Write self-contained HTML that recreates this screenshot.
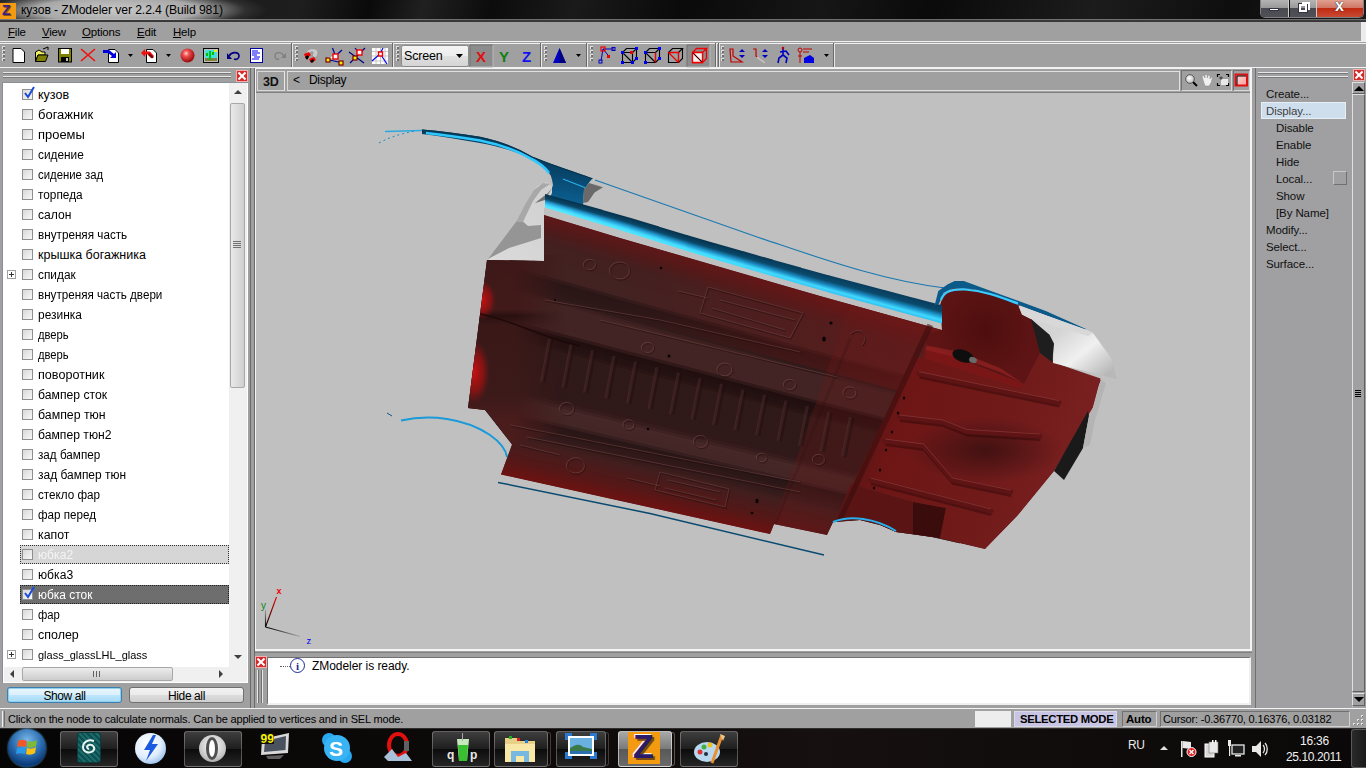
<!DOCTYPE html>
<html><head><meta charset="utf-8">
<style>
*{margin:0;padding:0;box-sizing:border-box}
html,body{width:1366px;height:768px;overflow:hidden;background:#a0a0a0;font-family:"Liberation Sans",sans-serif;font-size:12px;color:#000}
.a{position:absolute}
svg{position:absolute;overflow:visible}
#title{left:0;top:0;width:1366px;height:21px;background:linear-gradient(105deg,#141414 0%,#1e1e1e 22%,#0a0a0a 27%,#202020 31%,#0c0c0c 36%,#1a1a1a 42%,#0a0a0a 50%,#161616 60%,#0a0a0a 68%,#1c1c1c 80%,#0e0e0e 90%,#1a1a1a 100%);overflow:hidden;border-bottom:1px solid #3a3a3a}
#menubar{left:0;top:21px;width:1366px;height:20px;background:#a0a0a0;border-top:1px solid #383838}
.menu{top:4px;font-size:11.5px;letter-spacing:-0.2px}
#toolbar{left:0;top:41px;width:1366px;height:27px;background:#a0a0a0;border-top:1px solid #f0f0f0;border-bottom:1px solid #f0f0f0}
.grip{position:absolute;width:4px;height:16px;top:46px;background:repeating-linear-gradient(#d8d8d8 0 2px,#707070 2px 3px,#a0a0a0 3px 4px)}
.sep{position:absolute;top:43px;width:2px;height:24px;border-left:1px solid #707070;border-right:1px solid #e8e8e8}
.it{position:absolute;left:38px;transform-origin:0 0;font-size:12.5px;white-space:nowrap;line-height:14px}
.cb{position:absolute;left:22px;width:11px;height:11px;border:1px solid #8e8f8f;background:linear-gradient(135deg,#d8d8d8,#f8f8f8)}
.pl{position:absolute;left:7px;width:9px;height:9px;border:1px solid #a0a0a0;background:#fff}
.pl:before{content:"";position:absolute;left:1px;top:3px;width:5px;height:1px;background:#333}
.pl:after{content:"";position:absolute;left:3px;top:1px;width:1px;height:5px;background:#333}
.rx{position:absolute;width:12px;height:12px;background:#d42a2a;border:1px solid #f4b0b0}
.rx:before,.rx:after{content:"";position:absolute;left:0px;top:4px;width:10px;height:2px;background:#fff;transform:rotate(45deg)}
.rx:after{transform:rotate(-45deg)}
.rp{position:absolute;font-size:11.5px;letter-spacing:-0.1px;white-space:nowrap;color:#101010}
#vp{left:256px;top:93px;width:994px;height:556px;background:#c0c0c0;overflow:hidden}
.tb{position:absolute;top:731px;height:36px;border:1px solid rgba(255,255,255,0.28);border-radius:3px;background:linear-gradient(#3e3e3e,#1e1e1e 50%,#0c0c0c 51%,#262626)}
</style></head><body>
<!-- TITLE -->
<div id="title" class="a">
 <div class="a" style="left:0;top:0;width:300px;height:20px;background:radial-gradient(ellipse 150px 22px at 118px 10px,#c8c8c8 0%,#a8a8a8 55%,rgba(60,60,60,0.6) 85%,rgba(14,14,14,0) 100%)"></div>
 <div class="a" style="left:0;top:3px;width:16px;height:16px;background:#f39a12"></div>
 <div class="a" style="left:2px;top:2px;font:bold 14px 'Liberation Sans';color:#3a2080;text-shadow:1px 1px 0 #8a5010">Z</div>
 <div class="a" style="left:0;top:19px;width:1366px;height:1px;background:#c8c8c8;opacity:0.5"></div>
 <div class="a" style="left:21px;top:3px;font-size:12.2px;color:#000;white-space:nowrap;letter-spacing:-0.1px">кузов - ZModeler ver 2.2.4 (Build 981)</div>
 <div class="a" style="left:1260px;top:0;width:104px;height:18px;border:1px solid #808080;border-top:none;border-radius:0 0 5px 5px;overflow:hidden;background:#111">
  <div class="a" style="left:0;top:0;width:28px;height:17px;background:linear-gradient(#b4b4b4,#9a9a9a 45%,#4a4a50 50%,#505058);border-right:1px solid #cfcfcf"></div>
  <div class="a" style="left:8px;top:8px;width:10px;height:3px;background:#fff;border:1px solid #334"></div>
  <div class="a" style="left:29px;top:0;width:27px;height:17px;background:linear-gradient(#b4b4b4,#9a9a9a 45%,#4a4a50 50%,#505058);border-right:1px solid #cfcfcf"></div>
  <div class="a" style="left:38px;top:4px;width:8px;height:8px;border:2px solid #fff;outline:1px solid #334"></div>
  <div class="a" style="left:41px;top:2px;width:8px;height:8px;border-top:2px solid #fff;border-right:2px solid #fff"></div>
  <div class="a" style="left:56px;top:0;width:48px;height:17px;background:linear-gradient(#e0a090,#d07866 45%,#c02a10 50%,#c84a34)"></div>
  <div class="a" style="left:74px;top:-3px;font:bold 16px 'Liberation Sans';color:#fff;text-shadow:0 0 1px #223,0 0 1px #223">x</div>
 </div>
</div>
<!-- MENU -->
<div id="menubar" class="a">
 <span class="a menu" style="left:8px"><u>F</u>ile</span>
 <span class="a menu" style="left:42px"><u>V</u>iew</span>
 <span class="a menu" style="left:82px"><u>O</u>ptions</span>
 <span class="a menu" style="left:137px"><u>E</u>dit</span>
 <span class="a menu" style="left:173px"><u>H</u>elp</span>
</div>
<div class="a" style="left:1361px;top:22px;width:5px;height:19px;background:#ececec"></div>
<!-- TOOLBAR -->
<div id="toolbar" class="a">
 <div class="a" style="left:0;top:1px;width:1366px;height:1px;background:#f0f0f0"></div>
</div>
<div id="tbicons">
<svg style="left:0;top:41px" width="1366" height="27" viewBox="0 41 1366 27">
<g id="grips" fill="#e0e0e0">
 <rect x="2" y="46" width="3" height="3"/><rect x="2" y="50" width="3" height="3"/><rect x="2" y="54" width="3" height="3"/><rect x="2" y="58" width="3" height="3"/>
</g>
<g fill="#707070">
 <rect x="3" y="47" width="2" height="2"/><rect x="3" y="51" width="2" height="2"/><rect x="3" y="55" width="2" height="2"/><rect x="3" y="59" width="2" height="2"/>
</g>
<!-- new -->
<path d="M13 48.5 L21 48.5 L24.5 52 L24.5 62.5 L13 62.5 Z" fill="#fff" stroke="#000" stroke-width="1"/>
<!-- open -->
<path d="M35.5 52 L39 50 L42 52 L45 52 L45 55 L38 55 L35.5 61.5 Z" fill="#f0f060" stroke="#000"/>
<path d="M35.5 61.5 L38 55 L48 55 L45.5 61.5 Z" fill="#808000" stroke="#000"/>
<path d="M43 49 L48 47 L48 50" stroke="#000" fill="none"/>
<!-- save -->
<rect x="58.5" y="48.5" width="13" height="13.5" fill="#808000" stroke="#000"/>
<rect x="61" y="49" width="8" height="5" fill="#fff"/>
<rect x="61" y="57" width="8" height="5" fill="#000"/><rect x="66" y="58" width="2" height="3" fill="#c0c0c0"/>
<!-- delete X -->
<path d="M81 49 L95 61 M95 49 L81 61" stroke="#f01010" stroke-width="1.6"/>
<!-- import -->
<path d="M108.5 49.5 L115 49.5 L118.5 53 L118.5 62.5 L108.5 62.5 Z" fill="#fff" stroke="#000"/>
<path d="M103 50 L109 50 L114 54 L116 52 L116 58 L110 58 L112 56 L108 53 L103 53 Z" fill="#0000e0"/>
<path d="M128 54 L133 54 L130.5 57 Z" fill="#000"/>
<!-- export -->
<path d="M146.5 49.5 L153 49.5 L156.5 53 L156.5 62.5 L146.5 62.5 Z" fill="#fff" stroke="#000"/>
<path d="M141 53 L145 49 L145 51.5 L150 51.5 L154 56 L151 58 L148 54.5 L145 54.5 L145 57 Z" fill="#f01010"/>
<path d="M149 53 L154 57 L152 58.5 L148 55 Z" fill="#800000"/>
<path d="M166 54 L171 54 L168.5 57 Z" fill="#000"/>
<!-- red ball -->
<defs><radialGradient id="rb" cx="0.4" cy="0.35" r="0.6"><stop offset="0" stop-color="#ffd0d0"/><stop offset="0.35" stop-color="#f05050"/><stop offset="1" stop-color="#a01010"/></radialGradient></defs>
<circle cx="187.5" cy="55.5" r="7" fill="url(#rb)"/>
<!-- cactus image -->
<rect x="203.5" y="48.5" width="15" height="14" fill="#c0c0c0" stroke="#000"/>
<rect x="205" y="50" width="12" height="8" fill="#40e0e0"/><rect x="205" y="58" width="12" height="3" fill="#808040"/>
<rect x="209" y="51" width="2" height="9" fill="#00c000"/><rect x="206" y="53" width="2" height="3" fill="#00c000"/><rect x="212" y="52" width="2" height="3" fill="#00c000"/>
<rect x="214" y="50" width="3" height="2" fill="#f0f000"/>
<!-- undo -->
<path d="M229 56 C232 51 239 52 239 56 C239 59 236 60 234 59" stroke="#000080" stroke-width="1.6" fill="none"/>
<path d="M227 53 L227 59 L232 59 Z" fill="#000080"/>
<!-- doc blue -->
<rect x="250.5" y="48.5" width="12" height="14" fill="#fff" stroke="#0000a0"/>
<path d="M252 51 H258 M252 53 H260 M252 55 H257 M254 57 H260 M252 59 H259" stroke="#0000f0"/>
<!-- redo gray -->
<path d="M284 56 C281 51 275 52 275 56 C275 59 277 60 279 59" stroke="#808080" stroke-width="1.4" fill="none"/>
<path d="M286 53 L286 58 L281 58 Z" fill="#808080"/>
<!-- separators -->
<g stroke-width="1">
 <path d="M291.5 43 V67" stroke="#6a6a6a"/><path d="M292.5 43 V67" stroke="#e8e8e8"/>
 <path d="M392.5 43 V67" stroke="#6a6a6a"/><path d="M393.5 43 V67" stroke="#e8e8e8"/>
 <path d="M540.5 43 V67" stroke="#6a6a6a"/><path d="M541.5 43 V67" stroke="#e8e8e8"/>
 <path d="M586.5 43 V67" stroke="#6a6a6a"/><path d="M587.5 43 V67" stroke="#e8e8e8"/>
 <path d="M715.5 43 V67" stroke="#6a6a6a"/><path d="M716.5 43 V67" stroke="#e8e8e8"/>
 <path d="M718.5 43 V67" stroke="#6a6a6a"/><path d="M719.5 43 V67" stroke="#e8e8e8"/>
 <path d="M833.5 43 V67" stroke="#6a6a6a"/><path d="M834.5 43 V67" stroke="#e8e8e8"/>
</g>
<g fill="#e0e0e0">
 <rect x="295" y="46" width="3" height="3"/><rect x="295" y="50" width="3" height="3"/><rect x="295" y="54" width="3" height="3"/><rect x="295" y="58" width="3" height="3"/>
 <rect x="396" y="46" width="3" height="3"/><rect x="396" y="50" width="3" height="3"/><rect x="396" y="54" width="3" height="3"/><rect x="396" y="58" width="3" height="3"/>
 <rect x="544" y="46" width="3" height="3"/><rect x="544" y="50" width="3" height="3"/><rect x="544" y="54" width="3" height="3"/><rect x="544" y="58" width="3" height="3"/>
 <rect x="590" y="46" width="3" height="3"/><rect x="590" y="50" width="3" height="3"/><rect x="590" y="54" width="3" height="3"/><rect x="590" y="58" width="3" height="3"/>
 <rect x="721" y="46" width="3" height="3"/><rect x="721" y="50" width="3" height="3"/><rect x="721" y="54" width="3" height="3"/><rect x="721" y="58" width="3" height="3"/>
</g>
<g fill="#707070">
 <rect x="296" y="47" width="2" height="2"/><rect x="296" y="51" width="2" height="2"/><rect x="296" y="55" width="2" height="2"/><rect x="296" y="59" width="2" height="2"/>
 <rect x="397" y="47" width="2" height="2"/><rect x="397" y="51" width="2" height="2"/><rect x="397" y="55" width="2" height="2"/><rect x="397" y="59" width="2" height="2"/>
 <rect x="545" y="47" width="2" height="2"/><rect x="545" y="51" width="2" height="2"/><rect x="545" y="55" width="2" height="2"/><rect x="545" y="59" width="2" height="2"/>
 <rect x="591" y="47" width="2" height="2"/><rect x="591" y="51" width="2" height="2"/><rect x="591" y="55" width="2" height="2"/><rect x="591" y="59" width="2" height="2"/>
 <rect x="722" y="47" width="2" height="2"/><rect x="722" y="51" width="2" height="2"/><rect x="722" y="55" width="2" height="2"/><rect x="722" y="59" width="2" height="2"/>
</g>
<!-- magnet -->
<path d="M306 54 C306 49 313 47 317 50 C319 52 318 56 315 58 L312 55 C314 53 313 51 311 52 L309 54 Z" fill="#c8c8c8" stroke="#888" stroke-width="0.6"/>
<path d="M304 54 L309 52 L311 55 L306 59 Z" fill="#f00000"/><path d="M305 57 L308 55 L309 57 L307 60 Z" fill="#000"/>
<path d="M309 59 L314 57 L316 60 L311 63 Z" fill="#f00000"/><path d="M310 61 L313 59 L314 61 L312 63 Z" fill="#000"/>
<!-- vertex -->
<path d="M332.5 48 L335.5 56 M335.5 56 L342 50 M327.5 59.5 L340.5 62.5" stroke="#0000a0" stroke-width="1.2" fill="none"/>
<path d="M327 59 L336 56" stroke="#fff" stroke-width="1.5"/>
<rect x="333" y="54" width="5" height="5" fill="#fff" stroke="#f00000" stroke-width="1.4"/>
<rect x="326" y="58" width="4" height="4" fill="#f0f000" stroke="#800000" stroke-width="1.2"/>
<rect x="339" y="61" width="4" height="4" fill="#f0f000" stroke="#800000" stroke-width="1.2"/>
<!-- cross -->
<path d="M349 52 L364 63 M350 63 L365 48 M355 48 L359 53" stroke="#000080" stroke-width="1.2" fill="none"/>
<rect x="357" y="50" width="5" height="5" fill="#fff" stroke="#f00000" stroke-width="1.4"/>
<rect x="353" y="56" width="4" height="4" fill="#f0f000" stroke="#800000" stroke-width="1.2"/>
<!-- grid -->
<rect x="372" y="48" width="16" height="16" fill="#fff"/>
<path d="M372 51.5 H388 M372 56 H388 M372 61 H388 M376 48 V64 M380.5 48 V64 M385 48 V64" stroke="#c8c8c8" stroke-width="1"/>
<path d="M372 61 L380 54 L383 48 M381 55 L387 64" stroke="#0000f0" stroke-width="1.2" fill="none"/>
<rect x="378.5" y="52" width="4" height="4" fill="#fff" stroke="#f00000" stroke-width="1.4"/>
<!-- combo -->
<rect x="401.5" y="45.5" width="67" height="21" rx="2" fill="url(#cmb)" stroke="#8a8a8a"/>
<defs><linearGradient id="cmb" x1="0" y1="0" x2="0" y2="1"><stop offset="0" stop-color="#f4f4f4"/><stop offset="0.5" stop-color="#ececec"/><stop offset="0.51" stop-color="#e0e0e0"/><stop offset="1" stop-color="#d4d4d4"/></linearGradient></defs>
<text x="404" y="60" font-family="Liberation Sans" font-size="12.5" fill="#000" letter-spacing="-0.2">Screen</text>
<path d="M456 54 L463 54 L459.5 58 Z" fill="#000"/>
<!-- XYZ -->
<rect x="470" y="45" width="23" height="22" fill="#8c8c8c"/>
<path d="M470 67 V45 H493" stroke="#707070" fill="none"/><path d="M493 45 V67 H470" stroke="#b8b8b8" fill="none"/>
<text x="476" y="62" font-family="Liberation Sans" font-weight="bold" font-size="15" fill="#e01010">X</text>
<text x="499" y="62" font-family="Liberation Sans" font-weight="bold" font-size="15" fill="#108010">Y</text>
<text x="522" y="62" font-family="Liberation Sans" font-weight="bold" font-size="15" fill="#1010f0">Z</text>
<!-- cone -->
<path d="M559.5 48 L553 63 L566 63 Z" fill="#0000c0"/><path d="M559.5 48 L559.5 63 L566 63 Z" fill="#000080"/>
<path d="M576 54 L581 54 L578.5 57 Z" fill="#000"/>
<!-- vertex lines -->
<path d="M603 49 L601 61 M603 49 L614 49 M603 49 L608 55" stroke="#0000c0" stroke-width="1" fill="none"/>
<rect x="601" y="47" width="4" height="4" fill="none" stroke="#f00000" stroke-width="1.2"/>
<rect x="607" y="55" width="3" height="3" fill="#f00000"/>
<rect x="599" y="60" width="3" height="3" fill="none" stroke="#0000c0"/><rect x="612" y="47.5" width="3" height="3" fill="none" stroke="#0000c0"/>
<!-- cubes -->
<g fill="none" stroke-width="1.1">
 <path d="M622.5 52.5 H632.5 V62.5 H622.5 Z M622.5 52.5 L626.5 48.5 H636.5 L632.5 52.5 M636.5 48.5 V58.5 L632.5 62.5 M622.5 52.5 L632.5 62.5" stroke="#000"/>
 <path d="M645.5 52.5 H655.5 V62.5 H645.5 Z M645.5 52.5 L649.5 48.5 H659.5 L655.5 52.5 M659.5 48.5 V58.5 L655.5 62.5 M645.5 52.5 L655.5 62.5" stroke="#000"/>
 <path d="M668.5 52.5 H678.5 V62.5 H668.5 Z M668.5 52.5 L672.5 48.5 H682.5 L678.5 52.5 M682.5 48.5 V58.5 L678.5 62.5" stroke="#000"/>
 <path d="M668.5 52.5 L678.5 62.5 M668.5 52.5 H678.5 V62.5" stroke="#f00000" stroke-width="1.3"/>
</g>
<g fill="#0000f0"><rect x="621" y="51" width="3" height="3"/><rect x="631" y="61" width="3" height="3"/><rect x="635" y="47" width="3" height="3"/><rect x="621" y="61" width="3" height="3"/><rect x="635" y="57" width="3" height="3"/>
<rect x="644" y="51" width="3" height="3"/><rect x="644" y="61" width="3" height="3"/><rect x="658" y="47" width="3" height="3"/><rect x="658" y="57" width="3" height="3"/></g>
<rect x="630" y="51" width="3" height="3" fill="#f00000"/>
<path d="M655.5 52.5 V62.5" stroke="#f00000" stroke-width="1.3"/>
<rect x="687" y="45" width="23" height="22" fill="#8c8c8c"/>
<path d="M687 67 V45 H710" stroke="#707070" fill="none"/><path d="M710 45 V67 H687" stroke="#b8b8b8" fill="none"/>
<path d="M692.5 52.5 H702.5 V62.5 H692.5 Z M692.5 52.5 L696.5 48.5 H706.5 L702.5 52.5 M706.5 48.5 V58.5 L702.5 62.5 M692.5 52.5 L702.5 62.5" stroke="#f00000" stroke-width="1.3" fill="none"/>
<rect x="693" y="53" width="9" height="9" fill="#fff" opacity="0.9"/>
<path d="M692.5 52.5 H702.5 V62.5 H692.5 Z M692.5 52.5 L702.5 62.5" stroke="#f00000" stroke-width="1.3" fill="none"/>
<path d="M693 53 L702 62" stroke="#000" stroke-width="1"/>
<!-- last group -->
<path d="M730 49 L733 49 L733 56 L742 62 L731 62 Z" fill="none" stroke="#c00000" stroke-width="1.2"/>
<path d="M739 52 L742 49 L745 52 Z M739 55 L745 55 L742 58 Z" fill="#0000c0"/>
<path d="M753 49 L756 49 L756 56 L765 63" fill="none" stroke="#c00000" stroke-width="1.2"/>
<path d="M757 57 L765 63" stroke="#c0c0c0" stroke-width="2"/>
<path d="M762 52 L765 49 L768 52 Z M762 55 L768 55 L765 58 Z" fill="#0000c0"/>
<path d="M783 48 L783 55 L779 58 L778 63 M783 55 L787 58 L786 63 M780 52 L786 51 L789 55" stroke="#0000c0" stroke-width="1.6" fill="none"/>
<circle cx="783" cy="48" r="1.3" fill="#c00000"/>
<circle cx="800" cy="50" r="2" fill="none" stroke="#c00000"/><path d="M800 52 V63 M798 56 H802" stroke="#c00000"/>
<path d="M803 49 H812 M803 52 H809" stroke="#c00000"/>
<path d="M804 58 L810 55 L814 58 L814 63 L804 63 Z" fill="#0000e0"/>
<path d="M824 54 L829 54 L826.5 57 Z" fill="#000"/>
</svg>
</div>


<!-- LEFT PANEL -->
<div class="a" style="left:0;top:68px;width:251px;height:640px;background:#a0a0a0;border-right:1px solid #6a6a6a"></div>
<div class="a" style="left:3px;top:72px;width:228px;height:2px;border-top:1px solid #e8e8e8;border-bottom:1px solid #787878"></div>
<div class="a" style="left:3px;top:76px;width:228px;height:2px;border-top:1px solid #e8e8e8;border-bottom:1px solid #787878"></div>
<div class="rx" style="left:236px;top:70px"></div>
<div class="a" style="left:2px;top:82px;width:246px;height:601px;background:#fff;border-left:1px solid #8a9098;border-top:1px solid #8a9098"></div>
<div id="items">
<div class="cb" style="top:89px"></div>
<svg style="left:22px;top:86px" width="14" height="14"><path d="M3 7 L6 11 L12 1" stroke="#1a4ad8" stroke-width="2" fill="none"/></svg>
<div class="it" style="top:88.4px;transform:scaleX(1.0)">кузов</div>
<div class="cb" style="top:109px"></div>
<div class="it" style="top:108.4px;transform:scaleX(1.038)">богажник</div>
<div class="cb" style="top:129px"></div>
<div class="it" style="top:128.4px;transform:scaleX(1.035)">проемы</div>
<div class="cb" style="top:149px"></div>
<div class="it" style="top:148.4px;transform:scaleX(0.947)">сидение</div>
<div class="cb" style="top:169px"></div>
<div class="it" style="top:168.4px;transform:scaleX(0.908)">сидение зад</div>
<div class="cb" style="top:189px"></div>
<div class="it" style="top:188.4px;transform:scaleX(0.946)">торпеда</div>
<div class="cb" style="top:209px"></div>
<div class="it" style="top:208.4px;transform:scaleX(0.97)">салон</div>
<div class="cb" style="top:229px"></div>
<div class="it" style="top:228.4px;transform:scaleX(0.936)">внутреняя часть</div>
<div class="cb" style="top:249px"></div>
<div class="it" style="top:248.4px;transform:scaleX(1.0)">крышка богажника</div>
<div class="cb" style="top:269px"></div>
<div class="pl" style="top:270px"></div>
<div class="it" style="top:268.4px;transform:scaleX(0.949)">спидак</div>
<div class="cb" style="top:289px"></div>
<div class="it" style="top:288.4px;transform:scaleX(0.932)">внутреняя часть двери</div>
<div class="cb" style="top:309px"></div>
<div class="it" style="top:308.4px;transform:scaleX(0.956)">резинка</div>
<div class="cb" style="top:329px"></div>
<div class="it" style="top:328.4px;transform:scaleX(0.897)">дверь</div>
<div class="cb" style="top:349px"></div>
<div class="it" style="top:348.4px;transform:scaleX(0.897)">дверь</div>
<div class="cb" style="top:369px"></div>
<div class="it" style="top:368.4px;transform:scaleX(1.008)">поворотник</div>
<div class="cb" style="top:389px"></div>
<div class="it" style="top:388.4px;transform:scaleX(0.977)">бампер сток</div>
<div class="cb" style="top:409px"></div>
<div class="it" style="top:408.4px;transform:scaleX(0.987)">бампер тюн</div>
<div class="cb" style="top:429px"></div>
<div class="it" style="top:428.4px;transform:scaleX(0.974)">бампер тюн2</div>
<div class="cb" style="top:449px"></div>
<div class="it" style="top:448.4px;transform:scaleX(0.935)">зад бампер</div>
<div class="cb" style="top:469px"></div>
<div class="it" style="top:468.4px;transform:scaleX(0.957)">зад бампер тюн</div>
<div class="cb" style="top:489px"></div>
<div class="it" style="top:488.4px;transform:scaleX(0.935)">стекло фар</div>
<div class="cb" style="top:509px"></div>
<div class="it" style="top:508.4px;transform:scaleX(0.93)">фар перед</div>
<div class="cb" style="top:529px"></div>
<div class="it" style="top:528.4px;transform:scaleX(0.987)">капот</div>
<div class="a" style="left:20px;top:545px;width:209px;height:19px;background:#d6d6d6;border:1px dotted #303030"></div>
<div class="cb" style="top:549px"></div>
<div class="it" style="top:548.4px;color:#f4f4f4;transform:scaleX(0.971)">юбка2</div>
<div class="cb" style="top:569px"></div>
<div class="it" style="top:568.4px;transform:scaleX(0.971)">юбка3</div>
<div class="a" style="left:20px;top:585px;width:209px;height:19px;background:#6e6e6e;border:1px dotted #202020"></div>
<div class="cb" style="top:589px"></div>
<svg style="left:22px;top:586px" width="14" height="14"><path d="M3 7 L6 11 L12 1" stroke="#1a4ad8" stroke-width="2" fill="none"/></svg>
<div class="it" style="top:588.4px;color:#ffffff;transform:scaleX(0.955)">юбка сток</div>
<div class="cb" style="top:609px"></div>
<div class="it" style="top:608.4px;transform:scaleX(0.904)">фар</div>
<div class="cb" style="top:629px"></div>
<div class="it" style="top:628.4px;transform:scaleX(0.997)">сполер</div>
<div class="cb" style="top:649px"></div>
<div class="pl" style="top:650px"></div>
<div class="it" style="top:648.4px;font-size:11.2px;transform:scaleX(0.982)">glass_glassLHL_glass</div>
</div>
<!-- left scrollbar -->
<div class="a" style="left:229px;top:83px;width:18px;height:599px;background:#f0f0f0"></div>
<div class="a" style="left:234px;top:90px;width:0;height:0;border-left:4px solid transparent;border-right:4px solid transparent;border-bottom:4px solid #404040"></div>
<div class="a" style="left:230px;top:103px;width:15px;height:285px;border:1px solid #a8a8a8;border-radius:2px;background:linear-gradient(90deg,#e8e8e8,#dcdcdc 50%,#cfcfcf)"></div>
<div class="a" style="left:233px;top:241px;width:8px;height:7px;background:repeating-linear-gradient(#707070 0 1px,transparent 1px 2px)"></div>
<div class="a" style="left:234px;top:655px;width:0;height:0;border-left:4px solid transparent;border-right:4px solid transparent;border-top:4px solid #404040"></div>
<!-- h scrollbar -->
<div class="a" style="left:4px;top:667px;width:225px;height:15px;background:#f0f0f0"></div>
<div class="a" style="left:10px;top:670px;width:0;height:0;border-top:4px solid transparent;border-bottom:4px solid transparent;border-right:4px solid #404040"></div>
<div class="a" style="left:22px;top:667px;width:151px;height:14px;border:1px solid #a8a8a8;border-radius:2px;background:linear-gradient(#ececec,#dcdcdc 50%,#cccccc)"></div>
<div class="a" style="left:93px;top:671px;width:7px;height:6px;background:repeating-linear-gradient(90deg,#606060 0 1px,transparent 1px 3px)"></div>
<div class="a" style="left:219px;top:670px;width:0;height:0;border-top:4px solid transparent;border-bottom:4px solid transparent;border-left:4px solid #404040"></div>
<!-- buttons -->
<div class="a" style="left:7px;top:687px;width:115px;height:16px;border:1px solid #3c7fb1;border-radius:3px;background:linear-gradient(#eaf6fd,#d9f0fc 50%,#bee6fd 51%,#a7d9f5);box-shadow:inset 0 0 0 1px #8fd0ef"></div>
<div class="a" style="left:7px;top:689px;width:115px;text-align:center;font-size:12px;letter-spacing:-0.4px">Show all</div>
<div class="a" style="left:129px;top:687px;width:115px;height:16px;border:1px solid #707070;border-radius:3px;background:linear-gradient(#f2f2f2,#ebebeb 50%,#dddddd 51%,#cfcfcf)"></div>
<div class="a" style="left:129px;top:689px;width:115px;text-align:center;font-size:12px;letter-spacing:-0.4px">Hide all</div>

<!-- VIEWPORT FRAME -->
<div class="a" style="left:253px;top:68px;width:2px;height:640px;background:#6a6a6a;border-left:1px solid #a0a0a0"></div>
<div class="a" style="left:255px;top:68px;width:997px;height:583px;border-left:1px solid #f4f4f4;border-top:1px solid #f4f4f4;border-right:2px solid #f4f4f4;border-bottom:2px solid #f4f4f4"></div>
<div class="a" style="left:257px;top:71px;width:28px;height:20px;border:1px solid #d8d8d8;border-right-color:#e8e8e8;background:#a0a0a0"></div>
<div class="a" style="left:263px;top:75px;font:bold 12.5px 'Liberation Sans';letter-spacing:-0.3px;color:#101010">3D</div>
<div class="a" style="left:287px;top:71px;width:893px;height:20px;border:1px solid #e0e0e0;border-left-color:#d8d8d8;background:#a0a0a0"></div>
<div class="a" style="left:293px;top:73px;font-size:12px">&lt;</div>
<div class="a" style="left:309px;top:73px;font-size:12px;letter-spacing:-0.3px">Display</div>
<div class="a" style="left:1181px;top:70px;width:51px;height:21px;border:1px solid #d8d8d8;border-top-color:#707070;border-left-color:#707070;background:#a0a0a0"></div>
<div class="a" style="left:1233px;top:70px;width:17px;height:21px;border:1px solid #d8d8d8;border-top-color:#707070;border-left-color:#707070;background:#a0a0a0"></div>
<svg style="left:1180px;top:68px" width="72" height="26" viewBox="1180 68 72 26">
 <defs><radialGradient id="mg" cx="0.4" cy="0.4" r="0.7"><stop offset="0" stop-color="#fff"/><stop offset="1" stop-color="#b0b0b0"/></radialGradient>
 <linearGradient id="rsq" x1="0" y1="0" x2="1" y2="1"><stop offset="0" stop-color="#ffd8d8"/><stop offset="1" stop-color="#f4a0a0"/></linearGradient></defs>
 <path d="M1193 82 L1197 86" stroke="#000" stroke-width="2"/>
 <circle cx="1190" cy="79" r="4.3" fill="url(#mg)" stroke="#404040" stroke-width="0.8"/>
 <path d="M1203 80 L1202 76 L1204 75.5 L1205 78 L1205 74.5 L1207 74.5 L1207.5 78 L1208 75 L1210 75.5 L1210 79 L1211 77 L1212.5 77.5 L1211 83 L1209 86 L1205 86 Z" fill="#f0f0f0" stroke="#909090" stroke-width="0.6"/>
 <path d="M1217.5 77 V74.5 H1220 M1226 74.5 H1228.5 V77 M1228.5 83 V85.5 H1226 M1220 85.5 H1217.5 V83" stroke="#000" stroke-width="1.2" fill="none"/>
 <rect x="1221" y="79" width="7" height="6" fill="#e8e8e8"/>
 <path d="M1219 78 C1220 76 1222 76 1223 78 L1221 80 Z" fill="#505050"/>
 <rect x="1235.5" y="74.5" width="11.5" height="11" fill="url(#rsq)" stroke="#e01010" stroke-width="2"/>
 <path d="M1237 85 V76 H1246" stroke="#000" stroke-width="1" fill="none"/>
</svg>
<div class="a" style="left:256px;top:92px;width:994px;height:1px;background:#808080"></div>
<div id="vp" class="a"><svg style="left:0;top:0" width="994" height="556" viewBox="256 93 994 556">
<defs>
<clipPath id="cFloor"><polygon points="544.0,215.0 620.0,237.9 820.0,296.1 942.0,330.0 942.0,305.0 950.0,291.0 965.0,289.0 1000.0,297.0 1019.0,306.0 1033.0,320.0 1052.0,333.0 1053.0,362.0 1101.0,380.0 1088.0,411.0 1054.0,471.0 1018.0,515.0 985.0,549.0 932.0,537.0 896.0,532.0 880.0,525.0 860.0,520.0 833.0,522.0 827.0,535.0 774.0,524.0 770.0,534.0 501.0,474.5 512.0,444.5 485.0,410.0 468.0,408.0 487.0,260.0 544.0,261.0"/></clipPath>
<linearGradient id="gLeft" gradientUnits="userSpaceOnUse" x1="470" y1="0" x2="500" y2="0">
 <stop offset="0" stop-color="#c81414" stop-opacity="0.85"/><stop offset="1" stop-color="#b01010" stop-opacity="0"/>
</linearGradient>
<linearGradient id="gRedR" gradientUnits="userSpaceOnUse" x1="620" y1="0" x2="900" y2="0">
 <stop offset="0" stop-color="#7a1010" stop-opacity="0"/><stop offset="1" stop-color="#8a1414" stop-opacity="0.35"/>
</linearGradient>
<linearGradient id="gRear" gradientUnits="userSpaceOnUse" x1="870" y1="400" x2="1080" y2="470">
 <stop offset="0" stop-color="#581414"/><stop offset="0.15" stop-color="#6e1616"/><stop offset="0.6" stop-color="#701a1a"/><stop offset="1" stop-color="#7a2020"/>
</linearGradient>
<radialGradient id="gBlob" gradientUnits="userSpaceOnUse" cx="985" cy="450" r="55" gradientTransform="translate(985 450) scale(1.4 0.6) rotate(12) translate(-985 -450)">
 <stop offset="0" stop-color="#3a1010" stop-opacity="0.85"/><stop offset="1" stop-color="#3a1010" stop-opacity="0"/>
</radialGradient>
<linearGradient id="gFlap" gradientUnits="userSpaceOnUse" x1="490" y1="260" x2="550" y2="190">
 <stop offset="0" stop-color="#dadada"/><stop offset="1" stop-color="#d0d0d0"/>
</linearGradient>
<linearGradient id="gBump" gradientUnits="userSpaceOnUse" x1="1060" y1="330" x2="1100" y2="380">
 <stop offset="0" stop-color="#d4d4d4"/><stop offset="0.5" stop-color="#f0f0f0"/><stop offset="1" stop-color="#b8b8b8"/>
</linearGradient>
<linearGradient id="gFend" gradientUnits="userSpaceOnUse" x1="560" y1="165" x2="555" y2="200"><stop offset="0" stop-color="#073e60"/><stop offset="1" stop-color="#0c5e90"/></linearGradient>
</defs>
<path d="M595,180 C640,196 700,217 760,238 C820,258 880,280 945,288" stroke="#1a78b0" stroke-width="1.1" fill="none"/>
<path d="M498,482.4 L650,513.5 L824,555" stroke="#0a4a70" stroke-width="1.5" fill="none"/>
<path d="M401,420.5 C430,414 465,418 490,435 C500,442 506,450 507,457" stroke="#1a9ad8" stroke-width="2" fill="none"/>
<path d="M387,413 L392,416" stroke="#0a5a8a" stroke-width="1" fill="none"/>
<path d="M385,131.5 L422,130.5" stroke="#2aa8e0" stroke-width="1.6" fill="none"/>
<path d="M379,143 C390,137 400,134 415,131" stroke="#1a8cc8" stroke-width="1" fill="none" stroke-dasharray="2 3"/>
<path d="M422,129.5 C440,131 460,133.5 480,136.8 C500,141 518,148 532,156.6 C555,166 575,172 592.5,178.4 L589.4,182 L584,189.4 L583,206 L549,196 L553,185.2 C552.5,181 551.5,178 550.8,175.8 C548,171 545,168.5 542.5,166.5 C535,161 528,157.5 521.7,154.5 C508,149 495,146 480,143 C460,139.5 440,136 422,134 Z" fill="url(#gFend)"/>
<path d="M426,133 C445,135 462,137.5 480,140.5 C500,144.5 515,150 528,157 C538,162 545,167 549,173" stroke="#2ec8ff" stroke-width="2.6" fill="none"/>
<path d="M422,130 C440,131.5 460,134 480,137.3 C500,141.5 518,148.5 532,157 C555,166.5 575,172.5 592.5,178.8" stroke="#063650" stroke-width="1.2" fill="none"/>
<path d="M563,179 L586,188" stroke="#2ab0e8" stroke-width="1.2" fill="none"/>
<polygon points="589,183 603,187.3 594.6,192.5 588,202 583,203 584,189" fill="#6a6a6a"/>
<polygon points="488,260 503.5,243 518,219.5 530,197 537,186 546,182 552,186 552,193 544,209 544,261 503,263" fill="url(#gFlap)"/>
<polygon points="488,259 519,218 528,226 541,225 541,238 509,248" fill="#959595"/>
<polygon points="516,222 526,203 534,190 543,183 550,184 541,190 533,201 523,222" fill="#a8a8a8"/>
<polygon points="535,203 548,193 552,188 545,200" fill="#707070"/>
<g clip-path="url(#cFloor)">
<polygon points="544.0,215.0 620.0,237.9 820.0,296.1 942.0,330.0 942.0,305.0 950.0,291.0 965.0,289.0 1000.0,297.0 1019.0,306.0 1033.0,320.0 1052.0,333.0 1053.0,362.0 1101.0,380.0 1088.0,411.0 1054.0,471.0 1018.0,515.0 985.0,549.0 932.0,537.0 896.0,532.0 880.0,525.0 860.0,520.0 833.0,522.0 827.0,535.0 774.0,524.0 770.0,534.0 501.0,474.5 512.0,444.5 485.0,410.0 468.0,408.0 487.0,260.0 544.0,261.0" fill="#4a2222"/>
<polygon points="455.0,182.7 544.0,209.6 620.0,232.6 820.0,291.1 960.0,330.2 960.0,333.5 820.0,294.5 620.0,236.2 544.0,213.3 455.0,186.4" fill="#5f1717"/>
<polygon points="455.0,185.9 544.0,212.8 620.0,235.7 820.0,294.0 960.0,333.0 960.0,336.3 820.0,297.4 620.0,239.3 544.0,216.4 455.0,189.7" fill="#5f1717"/>
<polygon points="455.0,189.1 544.0,215.9 620.0,238.8 820.0,296.9 960.0,335.8 960.0,339.1 820.0,300.3 620.0,242.4 544.0,219.6 455.0,192.9" fill="#5c1818"/>
<polygon points="455.0,192.3 544.0,219.0 620.0,241.8 820.0,299.8 960.0,338.6 960.0,341.9 820.0,303.2 620.0,245.4 544.0,222.7 455.0,196.1" fill="#591919"/>
<polygon points="455.0,195.5 544.0,222.2 620.0,244.9 820.0,302.7 960.0,341.4 960.0,344.7 820.0,306.1 620.0,248.5 544.0,225.8 455.0,199.3" fill="#551919"/>
<polygon points="455.0,198.8 544.0,225.3 620.0,248.0 820.0,305.6 960.0,344.2 960.0,347.5 820.0,309.0 620.0,251.6 544.0,229.0 455.0,202.5" fill="#521a1a"/>
<polygon points="455.0,202.0 544.0,228.4 620.0,251.0 820.0,308.5 960.0,347.0 960.0,350.3 820.0,311.9 620.0,254.6 544.0,232.1 455.0,205.8" fill="#4e1b1b"/>
<polygon points="455.0,205.2 544.0,231.6 620.0,254.1 820.0,311.4 960.0,349.8 960.0,353.1 820.0,314.8 620.0,257.7 544.0,235.3 455.0,209.0" fill="#4b1c1c"/>
<polygon points="455.0,208.4 544.0,234.7 620.0,257.2 820.0,314.3 960.0,352.6 960.0,355.9 820.0,317.7 620.0,260.8 544.0,238.4 455.0,212.2" fill="#481e1e"/>
<polygon points="455.0,211.7 544.0,237.9 620.0,260.2 820.0,317.2 960.0,355.4 960.0,358.7 820.0,320.6 620.0,263.8 544.0,241.5 455.0,215.4" fill="#451f1f"/>
<polygon points="455.0,214.9 544.0,241.0 620.0,263.3 820.0,320.1 960.0,358.2 960.0,361.5 820.0,323.5 620.0,266.9 544.0,244.7 455.0,218.7" fill="#432020"/>
<polygon points="455.0,218.1 544.0,244.1 620.0,266.4 820.0,323.0 960.0,361.1 960.0,364.3 820.0,326.4 620.0,270.0 544.0,247.8 455.0,221.9" fill="#432121"/>
<polygon points="455.0,221.3 544.0,247.3 620.0,269.4 820.0,325.9 960.0,363.9 960.0,367.1 820.0,329.3 620.0,273.0 544.0,251.0 455.0,225.1" fill="#432121"/>
<polygon points="455.0,224.5 544.0,250.4 620.0,272.5 820.0,328.8 960.0,366.7 960.0,370.0 820.0,332.2 620.0,276.1 544.0,254.1 455.0,228.3" fill="#432121"/>
<polygon points="455.0,227.8 544.0,253.6 620.0,275.6 820.0,331.7 960.0,369.5 960.0,372.8 820.0,335.1 620.0,279.2 544.0,257.2 455.0,231.5" fill="#432121"/>
<polygon points="455.0,231.0 544.0,256.7 620.0,278.6 820.0,334.6 960.0,372.3 960.0,375.6 820.0,338.0 620.0,282.2 544.0,260.4 455.0,234.8" fill="#432121"/>
<polygon points="455.0,234.2 544.0,259.8 620.0,281.7 820.0,337.5 960.0,375.1 960.0,378.4 820.0,340.9 620.0,285.3 544.0,263.5 455.0,238.0" fill="#432222"/>
<polygon points="455.0,237.4 544.0,263.0 620.0,284.8 820.0,340.4 960.0,377.9 960.0,381.2 820.0,343.8 620.0,288.4 544.0,266.6 455.0,241.2" fill="#432222"/>
<polygon points="455.0,240.7 544.0,266.1 620.0,287.8 820.0,343.3 960.0,380.7 960.0,384.0 820.0,346.7 620.0,291.4 544.0,269.8 455.0,244.4" fill="#432222"/>
<polygon points="455.0,243.9 544.0,269.2 620.0,290.9 820.0,346.2 960.0,383.5 960.0,386.8 820.0,349.6 620.0,294.5 544.0,272.9 455.0,247.7" fill="#432222"/>
<polygon points="455.0,247.1 544.0,272.4 620.0,294.0 820.0,349.1 960.0,386.3 960.0,389.6 820.0,352.5 620.0,297.6 544.0,276.1 455.0,250.9" fill="#422222"/>
<polygon points="455.0,250.3 544.0,275.5 620.0,297.0 820.0,352.0 960.0,389.1 960.0,392.4 820.0,355.4 620.0,300.6 544.0,279.2 455.0,254.1" fill="#341b1b"/>
<polygon points="455.0,253.5 544.0,278.7 620.0,300.1 820.0,354.9 960.0,391.9 960.0,395.2 820.0,358.3 620.0,303.7 544.0,282.3 455.0,257.3" fill="#2a1616"/>
<polygon points="455.0,256.8 544.0,281.8 620.0,303.2 820.0,357.8 960.0,394.7 960.0,398.0 820.0,361.2 620.0,306.7 544.0,285.5 455.0,260.5" fill="#2b1717"/>
<polygon points="455.0,260.0 544.0,284.9 620.0,306.2 820.0,360.7 960.0,397.5 960.0,400.8 820.0,364.1 620.0,309.8 544.0,288.6 455.0,263.8" fill="#2c1717"/>
<polygon points="455.0,263.2 544.0,288.1 620.0,309.3 820.0,363.6 960.0,400.3 960.0,403.6 820.0,367.0 620.0,312.9 544.0,291.7 455.0,267.0" fill="#2d1818"/>
<polygon points="455.0,266.4 544.0,291.2 620.0,312.4 820.0,366.5 960.0,403.1 960.0,406.4 820.0,369.9 620.0,315.9 544.0,294.9 455.0,270.2" fill="#2e1919"/>
<polygon points="455.0,269.7 544.0,294.3 620.0,315.4 820.0,369.4 960.0,405.9 960.0,409.2 820.0,372.8 620.0,319.0 544.0,298.0 455.0,273.4" fill="#311a1a"/>
<polygon points="455.0,272.9 544.0,297.5 620.0,318.5 820.0,372.3 960.0,408.7 960.0,412.0 820.0,375.7 620.0,322.1 544.0,301.2 455.0,276.7" fill="#3c2020"/>
<polygon points="455.0,276.1 544.0,300.6 620.0,321.6 820.0,375.2 960.0,411.6 960.0,414.8 820.0,378.6 620.0,325.1 544.0,304.3 455.0,279.9" fill="#432424"/>
<polygon points="455.0,279.3 544.0,303.8 620.0,324.6 820.0,378.1 960.0,414.4 960.0,417.6 820.0,381.5 620.0,328.2 544.0,307.4 455.0,283.1" fill="#432424"/>
<polygon points="455.0,282.6 544.0,306.9 620.0,327.7 820.0,381.0 960.0,417.2 960.0,420.5 820.0,384.4 620.0,331.3 544.0,310.6 455.0,286.3" fill="#432424"/>
<polygon points="455.0,285.8 544.0,310.0 620.0,330.7 820.0,383.9 960.0,420.0 960.0,423.3 820.0,387.3 620.0,334.3 544.0,313.7 455.0,289.5" fill="#432424"/>
<polygon points="455.0,289.0 544.0,313.2 620.0,333.8 820.0,386.8 960.0,422.8 960.0,426.1 820.0,390.2 620.0,337.4 544.0,316.8 455.0,292.8" fill="#432424"/>
<polygon points="455.0,292.2 544.0,316.3 620.0,336.9 820.0,389.7 960.0,425.6 960.0,428.9 820.0,393.1 620.0,340.5 544.0,320.0 455.0,296.0" fill="#432424"/>
<polygon points="455.0,295.4 544.0,319.4 620.0,339.9 820.0,392.6 960.0,428.4 960.0,431.7 820.0,396.0 620.0,343.5 544.0,323.1 455.0,299.2" fill="#432424"/>
<polygon points="455.0,298.7 544.0,322.6 620.0,343.0 820.0,395.5 960.0,431.2 960.0,434.5 820.0,398.9 620.0,346.6 544.0,326.3 455.0,302.4" fill="#432424"/>
<polygon points="455.0,301.9 544.0,325.7 620.0,346.1 820.0,398.4 960.0,434.0 960.0,437.3 820.0,401.8 620.0,349.7 544.0,329.4 455.0,305.7" fill="#432424"/>
<polygon points="455.0,305.1 544.0,328.9 620.0,349.1 820.0,401.3 960.0,436.8 960.0,440.1 820.0,404.7 620.0,352.7 544.0,332.5 455.0,308.9" fill="#311919"/>
<polygon points="455.0,308.3 544.0,332.0 620.0,352.2 820.0,404.2 960.0,439.6 960.0,442.9 820.0,407.6 620.0,355.8 544.0,335.7 455.0,312.1" fill="#210f0f"/>
<polygon points="455.0,311.6 544.0,335.1 620.0,355.3 820.0,407.1 960.0,442.4 960.0,445.7 820.0,410.5 620.0,358.9 544.0,338.8 455.0,315.3" fill="#221010"/>
<polygon points="455.0,314.8 544.0,338.3 620.0,358.3 820.0,410.0 960.0,445.2 960.0,448.5 820.0,413.4 620.0,361.9 544.0,341.9 455.0,318.5" fill="#241111"/>
<polygon points="455.0,318.0 544.0,341.4 620.0,361.4 820.0,412.9 960.0,448.0 960.0,451.3 820.0,416.3 620.0,365.0 544.0,345.1 455.0,321.8" fill="#251212"/>
<polygon points="455.0,321.2 544.0,344.5 620.0,364.5 820.0,415.8 960.0,450.8 960.0,454.1 820.0,419.2 620.0,368.1 544.0,348.2 455.0,325.0" fill="#2a1515"/>
<polygon points="455.0,324.4 544.0,347.7 620.0,367.5 820.0,418.7 960.0,453.6 960.0,456.9 820.0,422.1 620.0,371.1 544.0,351.4 455.0,328.2" fill="#2f1919"/>
<polygon points="455.0,327.7 544.0,350.8 620.0,370.6 820.0,421.6 960.0,456.4 960.0,459.7 820.0,425.0 620.0,374.2 544.0,354.5 455.0,331.4" fill="#2f1919"/>
<polygon points="455.0,330.9 544.0,354.0 620.0,373.7 820.0,424.5 960.0,459.2 960.0,462.5 820.0,427.9 620.0,377.3 544.0,357.6 455.0,334.7" fill="#2f1919"/>
<polygon points="455.0,334.1 544.0,357.1 620.0,376.7 820.0,427.4 960.0,462.1 960.0,465.3 820.0,430.8 620.0,380.3 544.0,360.8 455.0,337.9" fill="#2f1919"/>
<polygon points="455.0,337.3 544.0,360.2 620.0,379.8 820.0,430.3 960.0,464.9 960.0,468.1 820.0,433.7 620.0,383.4 544.0,363.9 455.0,341.1" fill="#2f1919"/>
<polygon points="455.0,340.6 544.0,363.4 620.0,382.9 820.0,433.2 960.0,467.7 960.0,471.0 820.0,436.6 620.0,386.5 544.0,367.1 455.0,344.3" fill="#2f1919"/>
<polygon points="455.0,343.8 544.0,366.5 620.0,385.9 820.0,436.1 960.0,470.5 960.0,473.8 820.0,439.5 620.0,389.5 544.0,370.2 455.0,347.5" fill="#301919"/>
<polygon points="455.0,347.0 544.0,369.7 620.0,389.0 820.0,439.0 960.0,473.3 960.0,476.6 820.0,442.4 620.0,392.6 544.0,373.3 455.0,350.8" fill="#301919"/>
<polygon points="455.0,350.2 544.0,372.8 620.0,392.1 820.0,441.9 960.0,476.1 960.0,479.4 820.0,445.3 620.0,395.7 544.0,376.5 455.0,354.0" fill="#301919"/>
<polygon points="455.0,353.4 544.0,375.9 620.0,395.1 820.0,444.8 960.0,478.9 960.0,482.2 820.0,448.2 620.0,398.7 544.0,379.6 455.0,357.2" fill="#301919"/>
<polygon points="455.0,356.7 544.0,379.1 620.0,398.2 820.0,447.7 960.0,481.7 960.0,485.0 820.0,451.1 620.0,401.8 544.0,382.7 455.0,360.4" fill="#301919"/>
<polygon points="455.0,359.9 544.0,382.2 620.0,401.3 820.0,450.6 960.0,484.5 960.0,487.8 820.0,454.0 620.0,404.9 544.0,385.9 455.0,363.7" fill="#301919"/>
<polygon points="455.0,363.1 544.0,385.3 620.0,404.3 820.0,453.5 960.0,487.3 960.0,490.6 820.0,456.9 620.0,407.9 544.0,389.0 455.0,366.9" fill="#301919"/>
<polygon points="455.0,366.3 544.0,388.5 620.0,407.4 820.0,456.4 960.0,490.1 960.0,493.4 820.0,459.8 620.0,411.0 544.0,392.2 455.0,370.1" fill="#301919"/>
<polygon points="455.0,369.6 544.0,391.6 620.0,410.5 820.0,459.3 960.0,492.9 960.0,496.2 820.0,462.7 620.0,414.1 544.0,395.3 455.0,373.3" fill="#301919"/>
<polygon points="455.0,372.8 544.0,394.8 620.0,413.5 820.0,462.2 960.0,495.7 960.0,499.0 820.0,465.6 620.0,417.1 544.0,398.4 455.0,376.5" fill="#311919"/>
<polygon points="455.0,376.0 544.0,397.9 620.0,416.6 820.0,465.1 960.0,498.5 960.0,501.8 820.0,468.5 620.0,420.2 544.0,401.6 455.0,379.8" fill="#361c1c"/>
<polygon points="455.0,379.2 544.0,401.0 620.0,419.7 820.0,468.0 960.0,501.3 960.0,504.6 820.0,471.4 620.0,423.2 544.0,404.7 455.0,383.0" fill="#3e2222"/>
<polygon points="455.0,382.4 544.0,404.2 620.0,422.7 820.0,470.9 960.0,504.1 960.0,507.4 820.0,474.3 620.0,426.3 544.0,407.8 455.0,386.2" fill="#462828"/>
<polygon points="455.0,385.7 544.0,407.3 620.0,425.8 820.0,473.8 960.0,506.9 960.0,510.2 820.0,477.2 620.0,429.4 544.0,411.0 455.0,389.4" fill="#452727"/>
<polygon points="455.0,388.9 544.0,410.4 620.0,428.9 820.0,476.7 960.0,509.7 960.0,513.0 820.0,480.1 620.0,432.4 544.0,414.1 455.0,392.7" fill="#452727"/>
<polygon points="455.0,392.1 544.0,413.6 620.0,431.9 820.0,479.6 960.0,512.6 960.0,515.8 820.0,483.0 620.0,435.5 544.0,417.3 455.0,395.9" fill="#442626"/>
<polygon points="455.0,395.3 544.0,416.7 620.0,435.0 820.0,482.5 960.0,515.4 960.0,518.6 820.0,485.9 620.0,438.6 544.0,420.4 455.0,399.1" fill="#432626"/>
<polygon points="455.0,398.6 544.0,419.9 620.0,438.1 820.0,485.4 960.0,518.2 960.0,521.5 820.0,488.8 620.0,441.6 544.0,423.5 455.0,402.3" fill="#381f1f"/>
<polygon points="455.0,401.8 544.0,423.0 620.0,441.1 820.0,488.3 960.0,521.0 960.0,524.3 820.0,491.7 620.0,444.7 544.0,426.7 455.0,405.6" fill="#291616"/>
<polygon points="455.0,405.0 544.0,426.1 620.0,444.2 820.0,491.2 960.0,523.8 960.0,527.1 820.0,494.6 620.0,447.8 544.0,429.8 455.0,408.8" fill="#2c1717"/>
<polygon points="455.0,408.2 544.0,429.3 620.0,447.2 820.0,494.1 960.0,526.6 960.0,529.9 820.0,497.5 620.0,450.8 544.0,432.9 455.0,412.0" fill="#2e1818"/>
<polygon points="455.0,411.4 544.0,432.4 620.0,450.3 820.0,497.0 960.0,529.4 960.0,532.7 820.0,500.4 620.0,453.9 544.0,436.1 455.0,415.2" fill="#311919"/>
<polygon points="455.0,414.7 544.0,435.5 620.0,453.4 820.0,499.9 960.0,532.2 960.0,535.5 820.0,503.3 620.0,457.0 544.0,439.2 455.0,418.4" fill="#341b1b"/>
<polygon points="455.0,417.9 544.0,438.7 620.0,456.4 820.0,502.8 960.0,535.0 960.0,538.3 820.0,506.2 620.0,460.0 544.0,442.4 455.0,421.7" fill="#381c1c"/>
<polygon points="455.0,421.1 544.0,441.8 620.0,459.5 820.0,505.7 960.0,537.8 960.0,541.1 820.0,509.1 620.0,463.1 544.0,445.5 455.0,424.9" fill="#3e1d1d"/>
<polygon points="455.0,424.3 544.0,445.0 620.0,462.6 820.0,508.6 960.0,540.6 960.0,543.9 820.0,512.0 620.0,466.2 544.0,448.6 455.0,428.1" fill="#431e1e"/>
<polygon points="455.0,427.6 544.0,448.1 620.0,465.6 820.0,511.5 960.0,543.4 960.0,546.7 820.0,514.9 620.0,469.2 544.0,451.8 455.0,431.3" fill="#461d1d"/>
<polygon points="455.0,430.8 544.0,451.2 620.0,468.7 820.0,514.4 960.0,546.2 960.0,549.5 820.0,517.8 620.0,472.3 544.0,454.9 455.0,434.6" fill="#481c1c"/>
<polygon points="455.0,434.0 544.0,454.4 620.0,471.8 820.0,517.3 960.0,549.0 960.0,552.3 820.0,520.7 620.0,475.4 544.0,458.1 455.0,437.8" fill="#4b1b1b"/>
<polygon points="455.0,437.2 544.0,457.5 620.0,474.8 820.0,520.2 960.0,551.8 960.0,555.1 820.0,523.6 620.0,478.4 544.0,461.2 455.0,441.0" fill="#4e1a1a"/>
<polygon points="455.0,440.4 544.0,460.7 620.0,477.9 820.0,523.1 960.0,554.6 960.0,557.9 820.0,526.5 620.0,481.5 544.0,464.3 455.0,444.2" fill="#501919"/>
<polygon points="455.0,443.7 544.0,463.8 620.0,481.0 820.0,526.0 960.0,557.4 960.0,560.7 820.0,529.4 620.0,484.6 544.0,467.5 455.0,447.4" fill="#531818"/>
<polygon points="455.0,446.9 544.0,466.9 620.0,484.0 820.0,528.9 960.0,560.2 960.0,563.5 820.0,532.3 620.0,487.6 544.0,470.6 455.0,450.7" fill="#561717"/>
<polygon points="455.0,450.1 544.0,470.1 620.0,487.1 820.0,531.8 960.0,563.1 960.0,566.3 820.0,535.2 620.0,490.7 544.0,473.7 455.0,453.9" fill="#5b1616"/>
<polygon points="455.0,453.3 544.0,473.2 620.0,490.2 820.0,534.7 960.0,565.9 960.0,569.1 820.0,538.1 620.0,493.8 544.0,476.9 455.0,457.1" fill="#601515"/>
<polygon points="455.0,456.6 544.0,476.3 620.0,493.2 820.0,537.6 960.0,568.7 960.0,572.0 820.0,541.0 620.0,496.8 544.0,480.0 455.0,460.3" fill="#651414"/>
<polygon points="455.0,459.8 544.0,479.5 620.0,496.3 820.0,540.5 960.0,571.5 960.0,574.8 820.0,543.9 620.0,499.9 544.0,483.2 455.0,463.6" fill="#6a1313"/>
<polygon points="455.0,463.0 544.0,482.6 620.0,499.4 820.0,543.4 960.0,574.3 960.0,577.6 820.0,546.8 620.0,503.0 544.0,486.3 455.0,466.8" fill="#6e1212"/>
<polygon points="455.0,466.2 544.0,485.8 620.0,502.4 820.0,546.3 960.0,577.1 960.0,580.4 820.0,549.7 620.0,506.0 544.0,489.4 455.0,470.0" fill="#6e1212"/>
<polygon points="455.0,469.4 544.0,488.9 620.0,505.5 820.0,549.2 960.0,579.9 960.0,583.2 820.0,552.6 620.0,509.1 544.0,492.6 455.0,473.2" fill="#6e1212"/>
<polygon points="600.0,218.7 960.0,323.0 960.0,407.1 600.0,311.2" fill="url(#gRedR)"/>
<defs><linearGradient id="gLpm" gradientUnits="userSpaceOnUse" x1="515" y1="0" x2="565" y2="0"><stop offset="0" stop-color="#fff"/><stop offset="1" stop-color="#000"/></linearGradient><mask id="mLp" maskUnits="userSpaceOnUse" x="440" y="240" width="160" height="220"><rect x="440" y="240" width="160" height="220" fill="url(#gLpm)"/></mask><linearGradient id="gLpv" gradientUnits="userSpaceOnUse" x1="0" y1="262" x2="0" y2="420"><stop offset="0" stop-color="#3e1818"/><stop offset="0.3" stop-color="#421a1a"/><stop offset="0.34" stop-color="#2a1010"/><stop offset="0.4" stop-color="#3a1818"/><stop offset="0.85" stop-color="#3c1a1a"/><stop offset="1" stop-color="#4a1c1c"/></linearGradient><radialGradient id="gRs" cx="0.5" cy="0.5" r="0.5"><stop offset="0" stop-color="#d01010" stop-opacity="0.95"/><stop offset="0.6" stop-color="#b01010" stop-opacity="0.6"/><stop offset="1" stop-color="#901010" stop-opacity="0"/></radialGradient></defs>
<polygon points="455,255 570,255 570,430 512,444 485,410 455,410" fill="url(#gLpv)" mask="url(#mLp)"/>
<ellipse cx="482" cy="300" rx="14" ry="20" fill="url(#gRs)"/>
<ellipse cx="474" cy="372" rx="16" ry="32" fill="url(#gRs)"/>
<path d="M470,312 C490,315 510,322 530,330 C545,336 560,341 580,346" stroke="#1a0808" stroke-width="1.6" fill="none" opacity="0.8"/>
<polygon points="852.0,300.0 930.0,325.0 836.0,531.0 771.0,531.0" fill="#6a1a1a" opacity="0.3"/>
<polygon points="849,338 852,338 774,531 771,531" fill="#2a1010" opacity="0.2"/>
<ellipse cx="619.4" cy="270.4" rx="10" ry="8.5" fill="none" stroke="#7a4a4a" stroke-width="1" opacity="0.55"/><ellipse cx="620.6" cy="271.8" rx="10" ry="8.5" fill="none" stroke="#1e0c0c" stroke-width="1" opacity="0.45"/>
<ellipse cx="647.4" cy="347.4" rx="6" ry="5.1" fill="none" stroke="#7a4a4a" stroke-width="1" opacity="0.55"/><ellipse cx="648.6" cy="348.8" rx="6" ry="5.1" fill="none" stroke="#1e0c0c" stroke-width="1" opacity="0.45"/>
<ellipse cx="724.4" cy="369.4" rx="7.5" ry="6.375" fill="none" stroke="#7a4a4a" stroke-width="1" opacity="0.55"/><ellipse cx="725.6" cy="370.8" rx="7.5" ry="6.375" fill="none" stroke="#1e0c0c" stroke-width="1" opacity="0.45"/>
<ellipse cx="789.4" cy="384.4" rx="6" ry="5.1" fill="none" stroke="#7a4a4a" stroke-width="1" opacity="0.55"/><ellipse cx="790.6" cy="385.8" rx="6" ry="5.1" fill="none" stroke="#1e0c0c" stroke-width="1" opacity="0.45"/>
<ellipse cx="849.4" cy="392.4" rx="6.5" ry="5.5249999999999995" fill="none" stroke="#7a4a4a" stroke-width="1" opacity="0.55"/><ellipse cx="850.6" cy="393.8" rx="6.5" ry="5.5249999999999995" fill="none" stroke="#1e0c0c" stroke-width="1" opacity="0.45"/>
<ellipse cx="566.4" cy="408.4" rx="7" ry="5.95" fill="none" stroke="#7a4a4a" stroke-width="1" opacity="0.55"/><ellipse cx="567.6" cy="409.8" rx="7" ry="5.95" fill="none" stroke="#1e0c0c" stroke-width="1" opacity="0.45"/>
<ellipse cx="628.4" cy="424.4" rx="5.5" ry="4.675" fill="none" stroke="#7a4a4a" stroke-width="1" opacity="0.55"/><ellipse cx="629.6" cy="425.8" rx="5.5" ry="4.675" fill="none" stroke="#1e0c0c" stroke-width="1" opacity="0.45"/>
<ellipse cx="700.4" cy="441.4" rx="7" ry="5.95" fill="none" stroke="#7a4a4a" stroke-width="1" opacity="0.55"/><ellipse cx="701.6" cy="442.8" rx="7" ry="5.95" fill="none" stroke="#1e0c0c" stroke-width="1" opacity="0.45"/>
<ellipse cx="761.4" cy="457.4" rx="5" ry="4.25" fill="none" stroke="#7a4a4a" stroke-width="1" opacity="0.55"/><ellipse cx="762.6" cy="458.8" rx="5" ry="4.25" fill="none" stroke="#1e0c0c" stroke-width="1" opacity="0.45"/>
<ellipse cx="575.4" cy="465.4" rx="9" ry="7.6499999999999995" fill="none" stroke="#7a4a4a" stroke-width="1" opacity="0.55"/><ellipse cx="576.6" cy="466.8" rx="9" ry="7.6499999999999995" fill="none" stroke="#1e0c0c" stroke-width="1" opacity="0.45"/>
<ellipse cx="818.4" cy="459.4" rx="6" ry="5.1" fill="none" stroke="#7a4a4a" stroke-width="1" opacity="0.55"/><ellipse cx="819.6" cy="460.8" rx="6" ry="5.1" fill="none" stroke="#1e0c0c" stroke-width="1" opacity="0.45"/>
<ellipse cx="589.4" cy="264.4" rx="6" ry="5.1" fill="none" stroke="#7a4a4a" stroke-width="1" opacity="0.55"/><ellipse cx="590.6" cy="265.8" rx="6" ry="5.1" fill="none" stroke="#1e0c0c" stroke-width="1" opacity="0.45"/>
<path d="M600,320 L837,377" fill="none" stroke="#1e0c0c" stroke-width="1.6" opacity="0.45" transform="translate(0.7 1)"/><path d="M600,320 L837,377" fill="none" stroke="#7a4a4a" stroke-width="1" opacity="0.5"/>
<path d="M510,425 L800,482" fill="none" stroke="#1e0c0c" stroke-width="1.6" opacity="0.45" transform="translate(0.7 1)"/><path d="M510,425 L800,482" fill="none" stroke="#7a4a4a" stroke-width="1" opacity="0.5"/>
<path d="M527,437 L800,492" fill="none" stroke="#1e0c0c" stroke-width="1.6" opacity="0.45" transform="translate(0.7 1)"/><path d="M527,437 L800,492" fill="none" stroke="#7a4a4a" stroke-width="1" opacity="0.5"/>
<path d="M545,300 L660,320 L800,352" fill="none" stroke="#1e0c0c" stroke-width="1.6" opacity="0.45" transform="translate(0.7 1)"/><path d="M545,300 L660,320 L800,352" fill="none" stroke="#7a4a4a" stroke-width="1" opacity="0.5"/>
<path d="M678,291 L708,298 M708,287 L803,313 L790,338 L700,313 Z M720,300 L795,320 M712,308 L785,330" fill="none" stroke="#1e0c0c" stroke-width="1.6" opacity="0.45" transform="translate(0.7 1)"/><path d="M678,291 L708,298 M708,287 L803,313 L790,338 L700,313 Z M720,300 L795,320 M712,308 L785,330" fill="none" stroke="#7a4a4a" stroke-width="1" opacity="0.5"/>
<path d="M627,478 L660,486 M660,472 L729,489 L725,507 L655,490 Z M668,480 L720,492 M665,488 L716,500" fill="none" stroke="#1e0c0c" stroke-width="1.6" opacity="0.45" transform="translate(0.7 1)"/><path d="M627,478 L660,486 M660,472 L729,489 L725,507 L655,490 Z M668,480 L720,492 M665,488 L716,500" fill="none" stroke="#7a4a4a" stroke-width="1" opacity="0.5"/>
<path d="M520,445 L560,455" fill="none" stroke="#1e0c0c" stroke-width="1.6" opacity="0.45" transform="translate(0.7 1)"/><path d="M520,445 L560,455" fill="none" stroke="#7a4a4a" stroke-width="1" opacity="0.5"/>
<path d="M850,334 C860,325 870,335 862,345" fill="none" stroke="#1e0c0c" stroke-width="1.6" opacity="0.45" transform="translate(0.7 1)"/><path d="M850,334 C860,325 870,335 862,345" fill="none" stroke="#7a4a4a" stroke-width="1" opacity="0.5"/>
<path d="M550.0,339.0 L542.0,382.0" stroke="#1c0a0a" stroke-width="4" opacity="0.35" transform="translate(1.5 0.5)"/>
<path d="M550.0,339.0 L542.0,382.0" stroke="#4a2828" stroke-width="2.2" opacity="0.5"/>
<path d="M548.5,339.0 L540.5,382.0" stroke="#6a4040" stroke-width="0.8" opacity="0.4"/>
<path d="M571.5,344.7 L563.5,387.4" stroke="#1c0a0a" stroke-width="4" opacity="0.35" transform="translate(1.5 0.5)"/>
<path d="M571.5,344.7 L563.5,387.4" stroke="#4a2828" stroke-width="2.2" opacity="0.5"/>
<path d="M570.0,344.7 L562.0,387.4" stroke="#6a4040" stroke-width="0.8" opacity="0.4"/>
<path d="M593.0,350.3 L585.0,392.8" stroke="#1c0a0a" stroke-width="4" opacity="0.35" transform="translate(1.5 0.5)"/>
<path d="M593.0,350.3 L585.0,392.8" stroke="#4a2828" stroke-width="2.2" opacity="0.5"/>
<path d="M591.5,350.3 L583.5,392.8" stroke="#6a4040" stroke-width="0.8" opacity="0.4"/>
<path d="M614.5,356.0 L606.5,398.2" stroke="#1c0a0a" stroke-width="4" opacity="0.35" transform="translate(1.5 0.5)"/>
<path d="M614.5,356.0 L606.5,398.2" stroke="#4a2828" stroke-width="2.2" opacity="0.5"/>
<path d="M613.0,356.0 L605.0,398.2" stroke="#6a4040" stroke-width="0.8" opacity="0.4"/>
<path d="M636.0,361.6 L628.0,403.5" stroke="#1c0a0a" stroke-width="4" opacity="0.35" transform="translate(1.5 0.5)"/>
<path d="M636.0,361.6 L628.0,403.5" stroke="#4a2828" stroke-width="2.2" opacity="0.5"/>
<path d="M634.5,361.6 L626.5,403.5" stroke="#6a4040" stroke-width="0.8" opacity="0.4"/>
<path d="M657.5,367.2 L649.5,408.9" stroke="#1c0a0a" stroke-width="4" opacity="0.35" transform="translate(1.5 0.5)"/>
<path d="M657.5,367.2 L649.5,408.9" stroke="#4a2828" stroke-width="2.2" opacity="0.5"/>
<path d="M656.0,367.2 L648.0,408.9" stroke="#6a4040" stroke-width="0.8" opacity="0.4"/>
<path d="M679.0,372.7 L671.0,414.2" stroke="#1c0a0a" stroke-width="4" opacity="0.35" transform="translate(1.5 0.5)"/>
<path d="M679.0,372.7 L671.0,414.2" stroke="#4a2828" stroke-width="2.2" opacity="0.5"/>
<path d="M677.5,372.7 L669.5,414.2" stroke="#6a4040" stroke-width="0.8" opacity="0.4"/>
<path d="M700.5,378.3 L692.5,419.5" stroke="#1c0a0a" stroke-width="4" opacity="0.35" transform="translate(1.5 0.5)"/>
<path d="M700.5,378.3 L692.5,419.5" stroke="#4a2828" stroke-width="2.2" opacity="0.5"/>
<path d="M699.0,378.3 L691.0,419.5" stroke="#6a4040" stroke-width="0.8" opacity="0.4"/>
<path d="M722.0,383.8 L714.0,424.8" stroke="#1c0a0a" stroke-width="4" opacity="0.35" transform="translate(1.5 0.5)"/>
<path d="M722.0,383.8 L714.0,424.8" stroke="#4a2828" stroke-width="2.2" opacity="0.5"/>
<path d="M720.5,383.8 L712.5,424.8" stroke="#6a4040" stroke-width="0.8" opacity="0.4"/>
<path d="M743.5,389.4 L735.5,430.1" stroke="#1c0a0a" stroke-width="4" opacity="0.35" transform="translate(1.5 0.5)"/>
<path d="M743.5,389.4 L735.5,430.1" stroke="#4a2828" stroke-width="2.2" opacity="0.5"/>
<path d="M742.0,389.4 L734.0,430.1" stroke="#6a4040" stroke-width="0.8" opacity="0.4"/>
<path d="M765.0,394.9 L757.0,435.4" stroke="#1c0a0a" stroke-width="4" opacity="0.35" transform="translate(1.5 0.5)"/>
<path d="M765.0,394.9 L757.0,435.4" stroke="#4a2828" stroke-width="2.2" opacity="0.5"/>
<path d="M763.5,394.9 L755.5,435.4" stroke="#6a4040" stroke-width="0.8" opacity="0.4"/>
<path d="M786.5,400.5 L778.5,440.7" stroke="#1c0a0a" stroke-width="4" opacity="0.35" transform="translate(1.5 0.5)"/>
<path d="M786.5,400.5 L778.5,440.7" stroke="#4a2828" stroke-width="2.2" opacity="0.5"/>
<path d="M785.0,400.5 L777.0,440.7" stroke="#6a4040" stroke-width="0.8" opacity="0.4"/>
<path d="M808.0,406.1 L800.0,446.0" stroke="#1c0a0a" stroke-width="4" opacity="0.35" transform="translate(1.5 0.5)"/>
<path d="M808.0,406.1 L800.0,446.0" stroke="#4a2828" stroke-width="2.2" opacity="0.5"/>
<path d="M806.5,406.1 L798.5,446.0" stroke="#6a4040" stroke-width="0.8" opacity="0.4"/>
<path d="M829.5,411.6 L821.5,451.3" stroke="#1c0a0a" stroke-width="4" opacity="0.35" transform="translate(1.5 0.5)"/>
<path d="M829.5,411.6 L821.5,451.3" stroke="#4a2828" stroke-width="2.2" opacity="0.5"/>
<path d="M828.0,411.6 L820.0,451.3" stroke="#6a4040" stroke-width="0.8" opacity="0.4"/>
<path d="M851.0,417.0 L843.0,456.5" stroke="#1c0a0a" stroke-width="4" opacity="0.35" transform="translate(1.5 0.5)"/>
<path d="M851.0,417.0 L843.0,456.5" stroke="#4a2828" stroke-width="2.2" opacity="0.5"/>
<path d="M849.5,417.0 L841.5,456.5" stroke="#6a4040" stroke-width="0.8" opacity="0.4"/>
<ellipse cx="661" cy="268" rx="1.3" ry="1.3" fill="#080404"/>
<ellipse cx="831" cy="323" rx="1.6" ry="1.6" fill="#080404"/>
<ellipse cx="824" cy="339" rx="1.8" ry="2.6" fill="#080404"/>
<ellipse cx="669" cy="356" rx="1.5" ry="1.5" fill="#080404"/>
<ellipse cx="648" cy="429" rx="1.3" ry="1.3" fill="#080404"/>
<ellipse cx="757" cy="501" rx="1.6" ry="2.2" fill="#080404"/>
<ellipse cx="752" cy="513" rx="1.3" ry="1.3" fill="#080404"/>
<ellipse cx="555" cy="300" rx="1" ry="1" fill="#080404"/>
</g>
<polygon points="940.0,305.0 944.0,293.0 953.0,288.0 973.0,289.0 1020.0,305.5 1031.0,319.0 1040.0,353.0 1024.0,384.0 927.0,345.6 925.0,334.0 942.0,330.0" fill="url(#gWell)"/>
<defs><radialGradient id="gWell" gradientUnits="userSpaceOnUse" cx="985" cy="330" r="50"><stop offset="0" stop-color="#4e0e0e"/><stop offset="1" stop-color="#5e1414"/></radialGradient></defs>
<polygon points="927,345.6 1024,384 1020,389 923.7,358.4" fill="#7a1616"/>
<polygon points="927,345.6 960,352 1000,368 1024,384 1000,372 960,358 925,350" fill="#8e2020" opacity="0.8"/>
<ellipse cx="963" cy="356" rx="11" ry="6" transform="rotate(18 963 356)" fill="#0e0e0e"/>
<ellipse cx="973" cy="360" rx="4" ry="3" transform="rotate(18 973 360)" fill="#6a6a6a"/>
<polygon points="851,484 913,502 946,508 940,538 896,532 880,525 860,520 836,522" fill="#5a1414"/>
<polygon points="913,502 946,508 940,538 913,534" fill="#3a0c0c"/>
<polygon points="912.5,358.0 923.7,358.4 1020.0,389.0 1024.0,384.0 1040.0,353.0 1052.0,362.0 1100.5,378.4 1093.0,407.6 1054.0,471.0 1018.0,515.0 985.0,549.0 940.0,538.0 946.0,508.0 913.0,502.0 851.0,484.0 836.0,520.0" fill="url(#gRear)"/>
<polygon points="912.5,358.0 923.7,358.4 1020.0,389.0 1024.0,384.0 1040.0,353.0 1052.0,362.0 1100.5,378.4 1093.0,407.6 1054.0,471.0 1018.0,515.0 985.0,549.0 940.0,538.0 946.0,508.0 913.0,502.0 851.0,484.0 836.0,520.0" fill="url(#gBlob)"/>
<polygon points="927.6,323.7 933,326 843,519 837,520" fill="#3a0e0e" opacity="0.6"/>
<path d="M919,373.6 L1059,402.6" stroke="#2a0606" stroke-width="3" fill="none" opacity="0.45" transform="translate(0.5 3.5)"/>
<path d="M919,373.6 L1059,402.6" stroke="#5e1414" stroke-width="5" fill="none" stroke-linecap="round"/>
<path d="M919,373.6 L1059,402.6" stroke="#9a4444" stroke-width="1" fill="none" opacity="0.55" transform="translate(0 -2)"/>
<path d="M899.6,417 L943,422 L967,431.5 L1039.7,436" stroke="#2a0606" stroke-width="3" fill="none" opacity="0.45" transform="translate(0.5 3.5)"/>
<path d="M899.6,417 L943,422 L967,431.5 L1039.7,436" stroke="#5e1414" stroke-width="5" fill="none" stroke-linecap="round"/>
<path d="M899.6,417 L943,422 L967,431.5 L1039.7,436" stroke="#9a4444" stroke-width="1" fill="none" opacity="0.55" transform="translate(0 -2)"/>
<path d="M885,441 L923.8,446 L952.7,480 L1010.7,492" stroke="#2a0606" stroke-width="3" fill="none" opacity="0.45" transform="translate(0.5 3.5)"/>
<path d="M885,441 L923.8,446 L952.7,480 L1010.7,492" stroke="#5e1414" stroke-width="5" fill="none" stroke-linecap="round"/>
<path d="M885,441 L923.8,446 L952.7,480 L1010.7,492" stroke="#9a4444" stroke-width="1" fill="none" opacity="0.55" transform="translate(0 -2)"/>
<path d="M870.6,480 L991,511" stroke="#2a0606" stroke-width="3" fill="none" opacity="0.45" transform="translate(0.5 3.5)"/>
<path d="M870.6,480 L991,511" stroke="#5e1414" stroke-width="5" fill="none" stroke-linecap="round"/>
<path d="M870.6,480 L991,511" stroke="#9a4444" stroke-width="1" fill="none" opacity="0.55" transform="translate(0 -2)"/>
<ellipse cx="904" cy="398" rx="1.2" ry="1.6" fill="#100404"/>
<ellipse cx="898" cy="413" rx="1.2" ry="1.6" fill="#100404"/>
<ellipse cx="892" cy="432" rx="1.2" ry="1.6" fill="#100404"/>
<ellipse cx="886" cy="450" rx="1.2" ry="1.6" fill="#100404"/>
<ellipse cx="880" cy="470" rx="1.2" ry="1.6" fill="#100404"/>
<ellipse cx="874" cy="488" rx="1.2" ry="1.6" fill="#100404"/>
<defs><linearGradient id="gS0" gradientUnits="userSpaceOnUse" x1="559.1785714285714" y1="197.91" x2="555.50" y2="210.69"><stop offset="0" stop-color="#06304a"/><stop offset="0.35" stop-color="#0a4868"/><stop offset="0.6" stop-color="#29a7df"/><stop offset="0.82" stop-color="#48e0ff"/><stop offset="1" stop-color="#57ebff"/></linearGradient><linearGradient id="gS1" gradientUnits="userSpaceOnUse" x1="587.5357142857142" y1="205.74" x2="583.67" y2="219.15"><stop offset="0" stop-color="#06304a"/><stop offset="0.35" stop-color="#0a4868"/><stop offset="0.6" stop-color="#27a4dc"/><stop offset="0.82" stop-color="#47dfff"/><stop offset="1" stop-color="#54eaff"/></linearGradient><linearGradient id="gS2" gradientUnits="userSpaceOnUse" x1="615.8928571428571" y1="213.57" x2="611.76" y2="227.55"><stop offset="0" stop-color="#06304a"/><stop offset="0.35" stop-color="#0a4868"/><stop offset="0.6" stop-color="#25a1d9"/><stop offset="0.82" stop-color="#46deff"/><stop offset="1" stop-color="#51e8ff"/></linearGradient><linearGradient id="gS3" gradientUnits="userSpaceOnUse" x1="644.25" y1="222.07" x2="639.85" y2="236.28"><stop offset="0" stop-color="#06304a"/><stop offset="0.35" stop-color="#0a4868"/><stop offset="0.6" stop-color="#249ed6"/><stop offset="0.82" stop-color="#45ddff"/><stop offset="1" stop-color="#4ee7ff"/></linearGradient><linearGradient id="gS4" gradientUnits="userSpaceOnUse" x1="672.6071428571429" y1="230.68" x2="668.12" y2="245.18"><stop offset="0" stop-color="#06304a"/><stop offset="0.35" stop-color="#0a4868"/><stop offset="0.6" stop-color="#229bd3"/><stop offset="0.82" stop-color="#45ddff"/><stop offset="1" stop-color="#4be5ff"/></linearGradient><linearGradient id="gS5" gradientUnits="userSpaceOnUse" x1="700.9642857142857" y1="239.27" x2="696.54" y2="254.16"><stop offset="0" stop-color="#06304a"/><stop offset="0.35" stop-color="#0a4868"/><stop offset="0.6" stop-color="#2098d0"/><stop offset="0.82" stop-color="#44dcff"/><stop offset="1" stop-color="#48e4ff"/></linearGradient><linearGradient id="gS6" gradientUnits="userSpaceOnUse" x1="729.3214285714286" y1="247.31" x2="724.98" y2="262.46"><stop offset="0" stop-color="#06334e"/><stop offset="0.35" stop-color="#0a4869"/><stop offset="0.6" stop-color="#1f94cc"/><stop offset="0.82" stop-color="#43dbff"/><stop offset="1" stop-color="#43dcfc"/></linearGradient><linearGradient id="gS7" gradientUnits="userSpaceOnUse" x1="757.6785714285714" y1="255.34" x2="753.29" y2="270.67"><stop offset="0" stop-color="#073653"/><stop offset="0.35" stop-color="#0a496a"/><stop offset="0.6" stop-color="#1d90c8"/><stop offset="0.82" stop-color="#42daff"/><stop offset="1" stop-color="#3ed5fa"/></linearGradient><linearGradient id="gS8" gradientUnits="userSpaceOnUse" x1="786.0357142857143" y1="263.38" x2="781.59" y2="278.88"><stop offset="0" stop-color="#073957"/><stop offset="0.35" stop-color="#0a496b"/><stop offset="0.6" stop-color="#1c8dc5"/><stop offset="0.82" stop-color="#41d9ff"/><stop offset="1" stop-color="#3acdf7"/></linearGradient><linearGradient id="gS9" gradientUnits="userSpaceOnUse" x1="814.3928571428571" y1="271.41" x2="809.97" y2="287.13"><stop offset="0" stop-color="#083b5b"/><stop offset="0.35" stop-color="#0a4a6c"/><stop offset="0.6" stop-color="#1a89c1"/><stop offset="0.82" stop-color="#40d8ff"/><stop offset="1" stop-color="#35c5f5"/></linearGradient><linearGradient id="gS10" gradientUnits="userSpaceOnUse" x1="842.75" y1="279.02" x2="838.41" y2="295.09"><stop offset="0" stop-color="#083c5c"/><stop offset="0.35" stop-color="#0a4a6c"/><stop offset="0.6" stop-color="#1b8bc3"/><stop offset="0.82" stop-color="#40d8ff"/><stop offset="1" stop-color="#33c3f3"/></linearGradient><linearGradient id="gS11" gradientUnits="userSpaceOnUse" x1="871.1071428571429" y1="286.53" x2="866.69" y2="302.88"><stop offset="0" stop-color="#083c5c"/><stop offset="0.35" stop-color="#0a4a6c"/><stop offset="0.6" stop-color="#1c90c7"/><stop offset="0.82" stop-color="#40d8ff"/><stop offset="1" stop-color="#32c2f2"/></linearGradient><linearGradient id="gS12" gradientUnits="userSpaceOnUse" x1="899.4642857142857" y1="294.04" x2="894.97" y2="310.67"><stop offset="0" stop-color="#083c5c"/><stop offset="0.35" stop-color="#0a4a6c"/><stop offset="0.6" stop-color="#1d94ca"/><stop offset="0.82" stop-color="#40d8ff"/><stop offset="1" stop-color="#31c1f1"/></linearGradient><linearGradient id="gS13" gradientUnits="userSpaceOnUse" x1="927.8214285714286" y1="301.55" x2="923.25" y2="318.46"><stop offset="0" stop-color="#083c5c"/><stop offset="0.35" stop-color="#0a4a6c"/><stop offset="0.6" stop-color="#1e98ce"/><stop offset="0.82" stop-color="#40d8ff"/><stop offset="1" stop-color="#30c0f0"/></linearGradient></defs>
<polygon points="545.0,194.0 574.1,202.0 574.1,216.2 545.0,207.5" fill="url(#gS0)"/>
<polygon points="573.4,201.8 602.4,209.8 602.4,224.7 573.4,216.0" fill="url(#gS1)"/>
<polygon points="601.7,209.7 630.8,218.0 630.8,233.4 601.7,224.5" fill="url(#gS2)"/>
<polygon points="630.1,217.8 659.1,226.6 659.1,242.3 630.1,233.2" fill="url(#gS3)"/>
<polygon points="658.4,226.4 687.5,235.2 687.5,251.3 658.4,242.1" fill="url(#gS4)"/>
<polygon points="686.8,235.0 715.8,243.5 715.8,259.8 686.8,251.0" fill="url(#gS5)"/>
<polygon points="715.1,243.3 744.2,251.5 744.2,268.0 715.1,259.6" fill="url(#gS6)"/>
<polygon points="743.5,251.3 772.6,259.6 772.6,276.2 743.5,267.8" fill="url(#gS7)"/>
<polygon points="771.9,259.4 800.9,267.6 800.9,284.5 771.9,276.0" fill="url(#gS8)"/>
<polygon points="800.2,267.4 829.3,275.5 829.3,292.6 800.2,284.3" fill="url(#gS9)"/>
<polygon points="828.6,275.3 857.6,283.0 857.6,300.4 828.6,292.4" fill="url(#gS10)"/>
<polygon points="856.9,282.8 886.0,290.5 886.0,308.2 856.9,300.2" fill="url(#gS11)"/>
<polygon points="885.3,290.3 914.3,298.0 914.3,316.0 885.3,308.0" fill="url(#gS12)"/>
<polygon points="913.6,297.8 942.0,305.3 942.0,323.6 913.6,315.8" fill="url(#gS13)"/>
<polygon points="934.6,305.5 938.3,291.0 947.4,284.6 954.7,281.0 963.8,281.0 991.0,291.0 1045.8,311.0 1086.0,329.0 1084.0,330.0 1020.0,305.5 972.9,289.0 952.9,288.2 943.7,292.8 939.0,303.7" fill="#0c5a8a"/>
<path d="M941,300 C944,292 950,289 965,289.5 C985,291 1000,297 1018,303.5" stroke="#3ccaff" stroke-width="2.2" fill="none"/>
<polygon points="1018.5,305.5 1084.0,329.0 1093.0,332.9 1111.5,358.4 1117.0,379.3 1053.0,363.0 1054.0,342.0 1031.0,319.0 1022.0,314.6" fill="url(#gBump)"/>
<polygon points="1018.5,305.5 1084,329 1093,332.9 1088,336 1040,322 1031,319 1022,314.6" fill="#d8d8d8"/>
<polygon points="1031,319 1049.5,334.7 1054,343.8 1052.2,362 1040,353" fill="#1e1e1e"/>
<polygon points="1088,411 1089,416 1083,448 1064,480 1054,471" fill="#1a1a1a"/>
<polygon points="1101,380 1106,383 1095,420 1090,445 1083,448 1089,416 1093,407.6" fill="#b4b4b4"/>
<path d="M833,522 C850,515 875,518 896,531" stroke="#28b0ec" stroke-width="2" fill="none"/>
</svg></div><!--vpend-->
<svg style="left:256px;top:580px" width="70" height="70" viewBox="256 580 70 70">
 <defs><linearGradient id="gx" gradientUnits="userSpaceOnUse" x1="266" y1="627" x2="277" y2="597"><stop offset="0" stop-color="#000"/><stop offset="1" stop-color="#f00000"/></linearGradient>
 <linearGradient id="gy" gradientUnits="userSpaceOnUse" x1="266" y1="627" x2="266" y2="610"><stop offset="0" stop-color="#000"/><stop offset="1" stop-color="#a0a0a0"/></linearGradient>
 <linearGradient id="gz" gradientUnits="userSpaceOnUse" x1="266" y1="627" x2="300" y2="637"><stop offset="0" stop-color="#000"/><stop offset="1" stop-color="#a8a8a8"/></linearGradient></defs>
 <path d="M265.5 627 L276.5 597" stroke="url(#gx)" stroke-width="1.1"/>
 <path d="M265.5 627 L265.5 610" stroke="url(#gy)" stroke-width="1.1"/>
 <path d="M265.5 627 L300 636.5" stroke="url(#gz)" stroke-width="1.1"/>
 <text x="276.5" y="594" font-family="Liberation Sans" font-weight="bold" font-size="9" fill="#f00000">x</text>
 <text x="261" y="609" font-family="Liberation Sans" font-size="10" fill="#108010">y</text>
 <text x="306.5" y="644" font-family="Liberation Sans" font-size="9.5" fill="#0000f0">z</text>
</svg>


<!-- RIGHT PANEL -->
<div class="a" style="left:1254px;top:67px;width:112px;height:641px;background:#a0a0a2;border-top:1px solid #f4f4f4"></div>
<div class="a" style="left:1255px;top:68px;width:1px;height:640px;background:#707070"></div>
<div class="a" style="left:1258px;top:72px;width:90px;height:2px;border-top:1px solid #e8e8e8;border-bottom:1px solid #787878"></div>
<div class="a" style="left:1258px;top:76px;width:90px;height:2px;border-top:1px solid #e8e8e8;border-bottom:1px solid #787878"></div>
<div class="rx" style="left:1353px;top:69px"></div>
<div class="a" style="left:1352px;top:82px;width:13px;height:625px;background:#a0a0a2;border-left:1px solid #d0d0d0"></div>
<div class="a" style="left:1352px;top:82px;width:13px;height:12px;border:1px solid #e0e0e0;border-bottom-color:#606060;border-right-color:#606060"></div>
<div class="a" style="left:1354px;top:86px;width:0;height:0;border-left:5px solid transparent;border-right:5px solid transparent;border-bottom:5px solid #000"></div>
<div class="a" style="left:1352px;top:94px;width:13px;height:598px;border:1px solid #e0e0e0;border-bottom-color:#606060;border-right-color:#606060"></div>
<div class="a" style="left:1355px;top:390px;width:6px;height:8px;background:repeating-linear-gradient(#000 0 1px,transparent 1px 2px)"></div>
<div class="a" style="left:1352px;top:693px;width:13px;height:13px;border:1px solid #e0e0e0;border-bottom-color:#606060;border-right-color:#606060"></div>
<div class="a" style="left:1354px;top:697px;width:0;height:0;border-left:5px solid transparent;border-right:5px solid transparent;border-top:5px solid #000"></div>
<div class="a" style="left:1261px;top:102px;width:85px;height:17px;background:#cfdeed;border:1px solid #e6eef6"></div>
<div class="rp" style="left:1266px;top:88px">Create...</div>
<div class="rp" style="left:1266px;top:105px;color:#404040">Display...</div>
<div class="rp" style="left:1276px;top:122px">Disable</div>
<div class="rp" style="left:1276px;top:139px">Enable</div>
<div class="rp" style="left:1276px;top:156px">Hide</div>
<div class="rp" style="left:1276px;top:173px">Local...</div>
<div class="a" style="left:1333px;top:171px;width:14px;height:14px;border:1px solid #c8c8c8;border-right-color:#707070;border-bottom-color:#707070;background:#a0a0a2"></div>
<div class="rp" style="left:1276px;top:190px">Show</div>
<div class="rp" style="left:1276px;top:207px">[By Name]</div>
<div class="rp" style="left:1266px;top:224px">Modify...</div>
<div class="rp" style="left:1266px;top:241px">Select...</div>
<div class="rp" style="left:1266px;top:258px">Surface...</div>

<!-- LOG -->
<div class="a" style="left:255px;top:652px;width:997px;height:3px;background:#a0a0a0;border-top:1px solid #808080"></div>
<div class="rx" style="left:255px;top:656px"></div>
<div class="a" style="left:257px;top:670px;width:6px;height:33px;border-left:1px solid #e8e8e8;border-right:1px solid #e8e8e8;background:#a0a0a0"></div>
<div class="a" style="left:258px;top:670px;width:4px;height:33px;border-left:1px solid #707070;border-right:1px solid #707070"></div>
<div class="a" style="left:267px;top:657px;width:984px;height:48px;background:#fff;border-left:1px solid #707070;border-top:1px solid #707070;border-right:2px solid #f0f0f0;border-bottom:2px solid #f0f0f0"></div>
<div class="a" style="left:280px;top:666px;width:10px;height:1px;border-top:1px dotted #606060"></div>
<div class="a" style="left:290px;top:658px;width:15px;height:15px;border:1px solid #1a2a9a;border-radius:50%;background:#fff"></div>
<div class="a" style="left:296px;top:660px;font:bold 11px 'Liberation Serif';color:#1a2a9a">i</div>
<div class="a" style="left:312px;top:659px;font-size:12px;letter-spacing:-0.05px">ZModeler is ready.</div>

<!-- STATUS -->
<div class="a" style="left:0;top:708px;width:1366px;height:20px;background:#a0a0a0;border-top:1px solid #f4f4f4"></div>
<div class="a" style="left:2px;top:711px;width:3px;height:16px;border-left:1px solid #f0f0f0;border-right:1px solid #707070"></div>
<div class="a" style="left:8px;top:713px;font-size:11px;letter-spacing:-0.17px;white-space:nowrap">Click on the node to calculate normals. Can be applied to vertices and in SEL mode.</div>
<div class="a" style="left:975px;top:711px;width:36px;height:16px;background:#ededed"></div>
<div class="a" style="left:1014px;top:711px;width:103px;height:16px;background:#c8c4e4;border:1px solid #d8d8e8"></div>
<div class="a" style="left:1020px;top:713px;font:bold 11.3px 'Liberation Sans';letter-spacing:-0.3px;white-space:nowrap">SELECTED MODE</div>
<div class="a" style="left:1122px;top:711px;width:35px;height:16px;border:1px solid #d0d0d0;border-top-color:#707070;border-left-color:#707070"></div>
<div class="a" style="left:1126px;top:713px;font:bold 11.5px 'Liberation Sans';letter-spacing:-0.2px">Auto</div>
<div class="a" style="left:1160px;top:711px;width:190px;height:16px;border:1px solid #d0d0d0;border-top-color:#707070;border-left-color:#707070"></div>
<div class="a" style="left:1163px;top:713px;font-size:11px;letter-spacing:-0.17px;white-space:nowrap">Cursor: -0.36770, 0.16376, 0.03182</div>

<svg style="left:1350px;top:712px" width="16" height="16" viewBox="0 0 16 16"><g fill="#e8e8e8"><rect x="11" y="3" width="2" height="2"/><rect x="7" y="7" width="2" height="2"/><rect x="11" y="7" width="2" height="2"/><rect x="3" y="11" width="2" height="2"/><rect x="7" y="11" width="2" height="2"/><rect x="11" y="11" width="2" height="2"/></g><g fill="#707070"><rect x="12" y="4" width="1" height="1"/><rect x="8" y="8" width="1" height="1"/><rect x="12" y="8" width="1" height="1"/><rect x="4" y="12" width="1" height="1"/><rect x="8" y="12" width="1" height="1"/><rect x="12" y="12" width="1" height="1"/></g></svg>
<!-- TASKBAR -->
<div class="a" style="left:0;top:728px;width:1366px;height:40px;background:linear-gradient(90deg,#060505,#0e0a0a 40%,#161010 60%,#0a0808);border-top:1px solid #2e2e2e"></div>
<div id="task">
<!-- start orb -->
<div class="a" style="left:8px;top:729px;width:38px;height:38px;border-radius:50%;background:radial-gradient(circle at 50% 30%,#7ab8e8 0%,#2a6cb0 45%,#0c3a78 75%,#1a90d0 100%);box-shadow:0 0 2px #6ac0f0"></div>
<svg style="left:15px;top:737px" width="26" height="22" viewBox="0 0 26 22">
 <path d="M3 4 C6 2 9 3 12 4 L11 10 C8 9 5 9 2 10 Z" fill="#f05a28"/>
 <path d="M13 4 C16 5 19 5 22 3 L21 9 C18 11 15 11 12 10 Z" fill="#7cbb32"/>
 <path d="M2 11 C5 10 8 10 11 11 L10 17 C7 16 4 16 1 17 Z" fill="#2a9ae8"/>
 <path d="M12 11 C15 12 18 12 21 10 L20 16 C17 18 14 18 11 17 Z" fill="#fcc010"/>
</svg>
<!-- 3dsmax button -->
<div class="tb" style="left:60px;width:58px"></div>
<div class="a" style="left:77px;top:732px;width:24px;height:31px;border-radius:3px;background:repeating-linear-gradient(45deg,#1a6a6a 0 2px,#0e4e50 2px 4px);border:1px solid #0a3a3a"></div>
<svg style="left:80px;top:738px" width="18" height="18" viewBox="0 0 18 18"><path d="M14 3 C8 1 3 4 3 9 C3 14 9 16 13 13 C16 10 13 6 9 7 C6 8 7 11 9 11" stroke="#e8f4f0" stroke-width="2" fill="none"/></svg>
<!-- daemon -->
<div class="a" style="left:135px;top:733px;width:31px;height:31px;border-radius:50%;background:radial-gradient(circle at 40% 35%,#ffffff 0%,#e0eefc 50%,#8ab4e8 85%,#1a3a9a 100%)"></div>
<svg style="left:141px;top:734px" width="20" height="28" viewBox="0 0 20 28"><path d="M12 1 L3 16 L9 16 L5 27 L17 10 L11 10 L15 1 Z" fill="#1a5ae0"/></svg>
<!-- opera button -->
<div class="tb" style="left:184px;width:58px"></div>
<div class="a" style="left:199px;top:735px;width:27px;height:27px;border-radius:50%;background:radial-gradient(circle at 50% 40%,#ffffff,#c8c8c8 60%,#808080)"></div>
<div class="a" style="left:206px;top:737px;width:12px;height:23px;border-radius:50%;border:3px solid #505050;background:#fff"></div>
<!-- monitor 99 -->
<svg style="left:258px;top:731px" width="34" height="32" viewBox="0 0 34 32">
 <path d="M4 8 L31 2 L30 22 L3 24 Z" fill="#d8d8d8"/>
 <path d="M7 10 L28 5 L27.5 19 L6 21 Z" fill="#4a5260"/>
 <path d="M8 25 L26 24 L22 28 L10 28 Z" fill="#606060"/>
 <rect x="2" y="2" width="14" height="11" fill="#111"/>
 <text x="2.5" y="12" font-family="Liberation Sans" font-weight="bold" font-size="12" fill="#f8f000">99</text>
</svg>
<!-- skype -->
<svg style="left:321px;top:732px" width="32" height="32" viewBox="0 0 32 32">
 <circle cx="8" cy="8" r="7" fill="#28a8f0"/><circle cx="24" cy="24" r="7" fill="#28a8f0"/>
 <circle cx="16" cy="16" r="13" fill="#38b4f4"/>
 <text x="8" y="24" font-family="Liberation Sans" font-weight="bold" font-size="21" fill="#fff">S</text>
</svg>
<!-- ace -->
<svg style="left:382px;top:733px" width="32" height="30" viewBox="0 0 32 30">
 <ellipse cx="16" cy="12" rx="9" ry="11" fill="none" stroke="#e01010" stroke-width="4"/>
 <rect x="22" y="8" width="5" height="10" fill="#606060"/>
 <path d="M2 24 L10 16 L16 24 L24 20 L30 28 L6 28 Z" fill="#a8c0d8"/>
</svg>
<!-- qip -->
<div class="tb" style="left:432px;width:58px"></div>
<svg style="left:447px;top:733px" width="32" height="30" viewBox="0 0 32 30">
 <path d="M10 6 L22 6 L20 28 L12 28 Z" fill="#c8e8c0"/><path d="M11 12 L21 12 L20 28 L12 28 Z" fill="#38c030"/>
 <rect x="15" y="0" width="1" height="8" fill="#aaa"/>
 <text x="0" y="26" font-family="Liberation Sans" font-weight="bold" font-size="12" fill="#e8e8e8">q</text>
 <text x="23" y="26" font-family="Liberation Sans" font-weight="bold" font-size="12" fill="#e8e8e8">p</text>
</svg>
<!-- explorer -->
<div class="tb" style="left:494px;width:54px"></div>
<div class="a" style="left:548px;top:732px;width:3px;height:34px;border:1px solid rgba(255,255,255,0.2);border-left:none;border-radius:0 3px 3px 0"></div>
<svg style="left:503px;top:734px" width="34" height="30" viewBox="0 0 34 30">
 <path d="M2 4 L14 4 L16 7 L32 7 L32 28 L2 28 Z" fill="#e8d088"/>
 <path d="M2 10 L32 10 L32 28 L2 28 Z" fill="#f8e8a8"/>
 <rect x="6" y="2" width="3" height="3" fill="#20b020"/><rect x="14" y="4" width="3" height="3" fill="#e02020"/><rect x="22" y="6" width="3" height="3" fill="#2080e0"/>
 <path d="M8 28 L8 17 L26 17 L26 28 L21 28 L21 22 L13 22 L13 28 Z" fill="#78b8e0"/>
</svg>
<!-- photo viewer -->
<div class="tb" style="left:556px;width:50px"></div>
<div class="a" style="left:606px;top:732px;width:3px;height:34px;border:1px solid rgba(255,255,255,0.2);border-left:none;border-radius:0 3px 3px 0"></div>
<svg style="left:565px;top:733px" width="32" height="26" viewBox="0 0 32 26">
 <rect x="3" y="3" width="26" height="20" fill="#fff"/>
 <rect x="5" y="5" width="22" height="16" fill="#6ab0e0"/>
 <path d="M5 15 C10 12 14 10 18 14 L27 16 L27 21 L5 21 Z" fill="#3a7a4a"/>
 <path d="M5 18 L27 18 L27 21 L5 21 Z" fill="#2a70b0"/>
 <path d="M0 0 L7 0 L7 3 L3 3 L3 7 L0 7 Z M32 0 L25 0 L25 3 L29 3 L29 7 L32 7 Z M0 26 L7 26 L7 23 L3 23 L3 19 L0 19 Z M32 26 L25 26 L25 23 L29 23 L29 19 L32 19 Z" fill="#2a78d0"/>
</svg>
<!-- zmodeler active -->
<div class="tb" style="left:618px;width:54px;background:linear-gradient(#a8a8a8,#7a7a7a 50%,#585858 51%,#6a6a6a);border-color:rgba(255,255,255,0.55)"></div>
<div class="a" style="left:672px;top:732px;width:3px;height:34px;border:1px solid rgba(255,255,255,0.3);border-left:none;border-radius:0 3px 3px 0"></div>
<div class="a" style="left:628px;top:732px;width:32px;height:32px;background:#f49a10"></div>
<div class="a" style="left:633px;top:727px;font:bold 34px 'Liberation Sans';color:#2a1a6a;text-shadow:2px 2px 0 #7a4a10,-1px -1px 0 #fff">Z</div>
<!-- paint -->
<div class="tb" style="left:680px;width:58px"></div>
<svg style="left:692px;top:733px" width="34" height="32" viewBox="0 0 34 32">
 <ellipse cx="15" cy="19" rx="13" ry="10" fill="#b8d8f0"/>
 <circle cx="8" cy="19" r="2.5" fill="#e03030"/><circle cx="12" cy="14" r="2.5" fill="#40b040"/><circle cx="18" cy="12" r="2.5" fill="#f0c020"/>
 <circle cx="14" cy="21" r="2" fill="#203040"/>
 <path d="M30 2 L20 30" stroke="#e89030" stroke-width="3"/>
 <path d="M28 1 L33 3 L31 8 Z" fill="#e8c890"/>
</svg>
<!-- tray -->
<div class="a" style="left:1128px;top:738px;font-size:12px;color:#e8e8e8;letter-spacing:-0.3px">RU</div>
<div class="a" style="left:1160px;top:746px;width:0;height:0;border-left:4px solid transparent;border-right:4px solid transparent;border-bottom:4px solid #e0e0e0"></div>
<svg style="left:1180px;top:740px" width="18" height="18" viewBox="0 0 18 18"><rect x="1" y="1" width="1.5" height="16" fill="#e8e8e8"/><path d="M2.5 1 L11 2 L11 9 L2.5 8 Z" fill="#e8e8e8"/><circle cx="11.5" cy="12" r="4.5" fill="#e02020" stroke="#fff" stroke-width="1"/><path d="M9.5 10 L13.5 14 M13.5 10 L9.5 14" stroke="#fff" stroke-width="1.4"/></svg>
<svg style="left:1204px;top:740px" width="16" height="18" viewBox="0 0 16 18"><rect x="1" y="4" width="9" height="13" fill="#d8d8d8" stroke="#fff"/><rect x="5" y="2" width="9" height="11" fill="#e8e8e8" stroke="#777" stroke-width="0.6"/><rect x="8" y="0" width="1.5" height="3" fill="#fff"/><rect x="11" y="0" width="1.5" height="3" fill="#fff"/></svg>
<svg style="left:1227px;top:740px" width="18" height="18" viewBox="0 0 18 18"><rect x="1" y="0" width="3" height="6" fill="#e8e8e8"/><rect x="2" y="6" width="1.2" height="10" fill="#e8e8e8"/><rect x="5" y="5" width="12" height="9" fill="#222" stroke="#e8e8e8" stroke-width="1.3"/><rect x="8" y="15" width="6" height="1.5" fill="#e8e8e8"/></svg>
<svg style="left:1251px;top:740px" width="18" height="18" viewBox="0 0 18 18"><path d="M1 6 L5 6 L10 1 L10 17 L5 12 L1 12 Z" fill="#e8e8e8"/><path d="M12 5 C14 7 14 11 12 13 M14 3 C17 6 17 12 14 15" stroke="#e8e8e8" stroke-width="1.3" fill="none"/></svg>
<div class="a" style="left:1300px;top:734px;font-size:12px;color:#f0f0f0;letter-spacing:-0.2px">16:36</div>
<div class="a" style="left:1286px;top:750px;font-size:12px;color:#f0f0f0;letter-spacing:-0.4px">25.10.2011</div>
<div class="a" style="left:1351px;top:729px;width:15px;height:39px;border:1px solid #5a5a5a;border-right:none;border-radius:3px 0 0 3px;background:linear-gradient(90deg,#2a2a2a,#1a1a1a)"></div>
</div>

</body></html>
